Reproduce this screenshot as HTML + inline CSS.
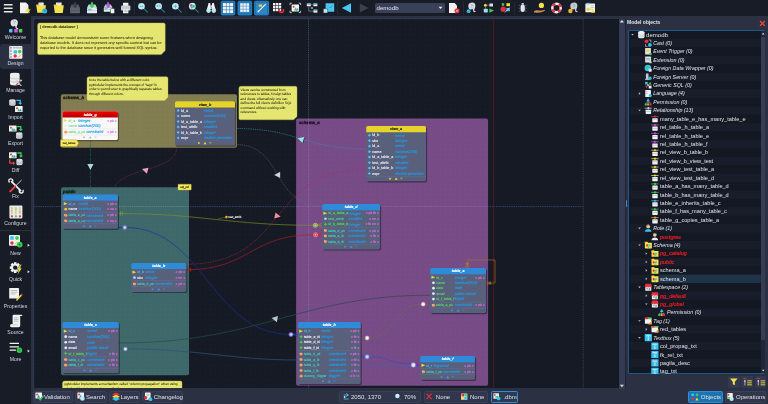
<!DOCTYPE html>
<html lang="en"><head><meta charset="utf-8"><title>pgModeler - demodb</title>
<style>
html,body{margin:0;padding:0;background:#171c26;overflow:hidden}
body{width:768px;height:404px;position:relative;will-change:transform;font-family:"Liberation Sans",sans-serif;color:#dfe2ea}
div,svg,span,i{position:absolute;box-sizing:border-box}
.ic{overflow:hidden;display:block}
.toolbar{left:0;top:0;width:768px;height:16px;background:#171c26}
.combo{left:374.5px;top:2.8px;width:70.5px;height:10.4px;background:#3a4058;border-radius:1.6px}
.combo span{left:2px;top:1.6px;font-size:6.1px;line-height:7px;color:#e4e6ee;white-space:nowrap}
.combo i{right:3px;top:4.2px;width:0;height:0;border-left:1.5px solid transparent;border-right:1.5px solid transparent;border-top:1.9px solid #f0f0f0}
.sidebar{left:0;top:0;width:31px;height:390px;background:#171c26}
.sel{left:0;top:43.8px;width:31px;height:25.6px;background:#2a2f42;border-radius:2.4px 0 0 2.4px}
.slabel{left:0;width:31px;text-align:center;font-size:5.15px;line-height:7px;color:#d4d7df;white-space:nowrap}
.sidesep{left:0;top:230.4px;width:31px;height:0.6px;background:#2a2f3e}
.center{left:31px;top:16px;width:737px;height:374px;background:#2b3042}
.vscroll{left:588.2px;top:2.6px;width:5.8px;height:370px;background:#353b52}
.vsep{left:594px;top:3px;width:1px;height:369.4px;background:#1f2433}
.split{left:594.6px;top:184px;width:1.6px;height:7px;background:#3a90dc;border-radius:0.6px}
.panel{left:596px;top:0;width:141px;height:374px}
.ptitle{left:0px;top:2.8px;font-size:5px;line-height:7px;font-weight:bold;color:#e2e4ec;white-space:nowrap}
.treebox{left:1.4px;top:13.6px;width:136.6px;height:344px;background:#141823;border:0.8px solid #1d5a8a;border-radius:1px}
.tscroll{left:131.2px;top:0.4px;width:4.2px;height:341.6px;background:#20253a}
.tthumb{left:0.2px;top:6px;width:4px;height:303px;background:#373d55;border-radius:0.6px}
.tree{left:0;top:0;width:768px;height:404px}
.tl{font-size:5.6px;line-height:8.4px;height:8.4px;color:#e2e4ec;white-space:nowrap}
.tl.big{font-size:6.1px}
.tl.it{font-style:italic;font-size:5.3px}
.tl.red{color:#f21c26;font-size:5.5px;-webkit-text-stroke:0.18px #f21c26}
.pbtn{top:359.6px;width:11.6px;height:12px;background:#333950;border-radius:1.4px}
.bottom{left:0;top:390px;width:768px;height:14px;background:linear-gradient(90deg,#171c26 31px,#2b3042 31px)}
.bbtn{top:1.4px;height:11.6px;background:#30364b;border:0.6px solid #3a4057;border-radius:1.4px;font-size:6px;line-height:10.4px;color:#dfe2ea;white-space:nowrap}
.bbtn span{top:0}
.bbtn.on{background:#1d72b0;border-color:#2a90da}
.bbtn.dbm{border-color:#2f8fd6;background:#2c3a52}
svg text{font-family:"Liberation Sans",sans-serif;text-rendering:geometricPrecision}
u{text-decoration-thickness:0.3px;text-underline-offset:0.8px;text-decoration-color:rgba(223,226,234,0.45)}
</style></head>
<body>
<div class="center">
<svg class="ic canvas" style="left:0;top:0" width="589" height="372.4" viewBox="31 16 589 372.4" font-family="Liberation Sans, sans-serif"><defs><pattern id="gd" x="34.6" y="19.4" width="5" height="5" patternUnits="userSpaceOnUse"><rect x="0" y="0" width="0.9" height="0.9" fill="#1e2331"/></pattern><pattern id="gd2" x="34.6" y="19.4" width="5" height="5" patternUnits="userSpaceOnUse"><rect x="0" y="0" width="0.9" height="0.9" fill="rgba(255,255,255,0.07)"/></pattern></defs><rect x="34" y="19" width="585" height="369.4" fill="#151a24"/><rect x="34" y="19" width="459.5" height="369.4" fill="url(#gd)"/><line x1="34" y1="18.7" x2="583.4" y2="18.7" stroke="#3c4468" stroke-width="0.8" stroke-dasharray="1.3 0.9"/><line x1="33.8" y1="19" x2="33.8" y2="388.4" stroke="#3c4468" stroke-width="0.8" stroke-dasharray="1.3 0.9"/><line x1="583.2" y1="19" x2="583.2" y2="388.4" stroke="#3a4262" stroke-width="0.9" stroke-dasharray="1.3 0.9"/><line x1="308.5" y1="19" x2="308.5" y2="388.4" stroke="#44507e" stroke-width="0.8" stroke-dasharray="1.3 0.9"/><line x1="34" y1="206.6" x2="583" y2="206.6" stroke="#44507e" stroke-width="0.8" stroke-dasharray="1.3 0.9"/><line x1="493.6" y1="19" x2="493.6" y2="388.4" stroke="#5c1820" stroke-width="0.9"/><rect x="60.8" y="94.2" width="176.2" height="53.6" fill="#827d51" rx="2"/><text x="63" y="99.4" font-size="4.3" fill="#15150c" stroke="#15150c" stroke-width="0.25" font-weight="bold" font-style="italic">schema_b</text><rect x="61" y="187.2" width="128" height="188" fill="#3e6869" rx="2"/><text x="63" y="192.7" font-size="4.3" fill="#0e1a1a" stroke="#0e1a1a" stroke-width="0.25" font-weight="bold" font-style="italic">public</text><rect x="296.1" y="118.5" width="192" height="267.2" fill="#764b86" rx="2"/><text x="298.9" y="124.2" font-size="4.3" fill="#1a0e20" stroke="#1a0e20" stroke-width="0.25" font-weight="bold" font-style="italic">schema_a</text><rect x="296.1" y="118.5" width="192" height="267.2" fill="url(#gd2)" rx="2"/><rect x="61" y="187.2" width="128" height="188" fill="url(#gd2)" rx="2"/><rect x="60.8" y="94.2" width="176.2" height="53.6" fill="url(#gd2)" rx="2"/><line x1="308.5" y1="119" x2="308.5" y2="385.5" stroke="#8a70b4" stroke-width="0.7" stroke-dasharray="1.3 0.9"/><line x1="296.5" y1="206.6" x2="488" y2="206.6" stroke="#8a70b4" stroke-width="0.7" stroke-dasharray="1.3 0.9"/><line x1="61.5" y1="206.6" x2="188.5" y2="206.6" stroke="#6a9a9a" stroke-width="0.7" stroke-dasharray="1.3 0.9"/><rect x="178" y="184.2" width="13.2" height="5.8" fill="#f6ea62" rx="0.4" stroke="#b8ac30" stroke-width="0.4"/><text x="184.6" y="188.2" font-size="2.9" fill="#2a2a10" stroke="#2a2a10" stroke-width="0.14" text-anchor="middle">sql_ref</text><line x1="90.5" y1="140" x2="90.5" y2="194.5" stroke="#22685c" stroke-width="0.6" stroke-dasharray="2.4 0.7 0.7 0.7"/><polygon points="91,170.6 87.89,164.62 94.11,164.62" fill="rgba(5,8,14,0.55)"/><polygon points="90.4,169.9 87.29,163.92 93.51,163.92" fill="#a8dccc"/><path d="M177,146 C177,175 113,165 113,194.5" fill="none" stroke="#a82860" stroke-width="0.6" stroke-dasharray="0.9 0.8"/><polygon points="142.53,169.82 149.11,168.36 147.5,174.37" fill="rgba(5,8,14,0.55)"/><polygon points="141.93,169.12 148.51,167.66 146.9,173.67" fill="#e8a0c4"/><path d="M235,128.5 C300,128.5 300,148.8 366.3,148.8" fill="none" stroke="#2a9cac" stroke-width="0.6" stroke-dasharray="1.3 0.9"/><polygon points="298.27,138.89 304.89,137.66 303.07,143.61" fill="rgba(5,8,14,0.55)"/><polygon points="297.67,138.19 304.29,136.96 302.47,142.91" fill="#98e8e8"/><path d="M235,144.5 C285,144.5 270,205.4 322.3,205.4" fill="none" stroke="#666c84" stroke-width="0.55" stroke-dasharray="1.3 0.9"/><polygon points="274.8,175.6 280.78,172.49 280.78,178.71" fill="rgba(5,8,14,0.55)"/><polygon points="274.2,174.9 280.18,171.79 280.18,178.01" fill="#cfd4e0"/><path d="M186,264.2 C290,264 265,169.4 366.3,169.4" fill="none" stroke="#c42844" stroke-width="0.6" stroke-dasharray="0.9 0.8"/><polygon points="281.32,217.49 274.82,219.29 276.12,213.2" fill="rgba(5,8,14,0.55)"/><polygon points="280.72,216.79 274.22,218.59 275.52,212.5" fill="#f08c9c"/><path d="M186,269.8 C250,269.8 250,234.8 313.6,234.8" fill="none" stroke="#b81c24" stroke-width="0.65"/><path d="M188.7,267.6 v4.4 M190.5,267.6 v4.4" fill="none" stroke="#d01c24" stroke-width="0.6"/><path d="M317.6,234.8 L322.2,232.6 M317.6,234.8 L322.2,237 M317.6,234.8 H322.2" fill="none" stroke="#d82434" stroke-width="0.6"/><circle cx="315.6" cy="234.8" r="2.1" fill="#e8404c" stroke="#f4a0a8" stroke-width="0.6"/><rect x="314.8" y="234" width="1.6" height="1.6" fill="rgba(255,255,255,0.55)" rx="0.3"/><path d="M118,213.5 C200,213.5 230,225.3 313.4,225.3" fill="none" stroke="#7e9020" stroke-width="0.65"/><path d="M120.4,211.4 v4.2 M122.2,211.4 v4.2" fill="none" stroke="#96a828" stroke-width="0.6"/><path d="M317.4,225.3 L322.2,223.1 M317.4,225.3 L322.2,227.5 M317.4,225.3 H322.2" fill="none" stroke="#869820" stroke-width="0.6"/><circle cx="315.4" cy="225.3" r="2.1" fill="#8aa040" stroke="#c4d48c" stroke-width="0.6"/><rect x="314.6" y="224.5" width="1.6" height="1.6" fill="rgba(255,255,255,0.55)" rx="0.3"/><path d="M218,218.6 L226.4,217.2" fill="none" stroke="#869820" stroke-width="0.4"/><circle cx="226.4" cy="217.1" r="1.3" fill="#f2b414"/><text x="228.6" y="218.2" font-size="2.9" fill="#e8e8ee" stroke="#e8e8ee" stroke-width="0.14">test_attrib</text><path d="M118,227.5 H125 C205,227.5 210,334 291,334.5" fill="none" stroke="#1c2fa0" stroke-width="0.65"/><path d="M120.2,225.6 v3.8" fill="none" stroke="#2a44c8" stroke-width="0.6"/><circle cx="124.8" cy="227.5" r="1.9" fill="#b4b0ee" stroke="#7a78d8" stroke-width="0.6"/><rect x="124" y="226.7" width="1.6" height="1.6" fill="rgba(255,255,255,0.55)" rx="0.3"/><path d="M293,334.5 L297.8,332.3 M293,334.5 L297.8,336.7 M293,334.5 H297.8" fill="none" stroke="#2438b8" stroke-width="0.6"/><circle cx="291" cy="334.5" r="2.1" fill="#a6a4ec" stroke="#6c6ad4" stroke-width="0.6"/><rect x="290.2" y="333.7" width="1.6" height="1.6" fill="rgba(255,255,255,0.55)" rx="0.3"/><path d="M118.8,343 C260,343 300,295.2 430.3,295.2" fill="none" stroke="#2a4a4e" stroke-width="0.7"/><polygon points="272.16,318.74 278.59,316.71 277.51,322.84" fill="rgba(5,8,14,0.55)"/><polygon points="271.56,318.04 277.99,316.01 276.91,322.14" fill="#b0ccc4"/><path d="M127,349 C200,349 230,360 297.9,360" fill="none" stroke="#32507c" stroke-width="0.7"/><circle cx="125.4" cy="349" r="1.8" fill="#d4d6ee" stroke="#9a9cc8" stroke-width="0.6"/><rect x="124.6" y="348.2" width="1.6" height="1.6" fill="rgba(255,255,255,0.55)" rx="0.3"/><line x1="119" y1="349" x2="123.6" y2="349" stroke="#32507c" stroke-width="0.6"/><path d="M369,338 C395,338 395,304.2 421.2,304.2" fill="none" stroke="#6c6a5c" stroke-width="0.6"/><circle cx="367.1" cy="338" r="1.9" fill="#f2eedc" stroke="#c8c4a8" stroke-width="0.6"/><rect x="366.3" y="337.2" width="1.6" height="1.6" fill="rgba(255,255,255,0.55)" rx="0.3"/><circle cx="423.2" cy="304.2" r="1.9" fill="#f2eedc" stroke="#c8c4a8" stroke-width="0.6"/><rect x="422.4" y="303.4" width="1.6" height="1.6" fill="rgba(255,255,255,0.55)" rx="0.3"/><line x1="360.6" y1="338" x2="365.2" y2="338" stroke="#6c6a5c" stroke-width="0.5"/><line x1="425.2" y1="304.2" x2="430.2" y2="304.2" stroke="#6c6a5c" stroke-width="0.5"/><path d="M369,356.8 C390,356.8 390,364 411.4,364" fill="none" stroke="#3448c8" stroke-width="0.65"/><path d="M360.6,354.6 L365.2,356.8 L360.6,359 M360.6,356.8 H365.2" fill="none" stroke="#3448c8" stroke-width="0.6"/><circle cx="367.1" cy="356.8" r="2.1" fill="#a8c4f4" stroke="#6c8cdc" stroke-width="0.6"/><rect x="366.3" y="356" width="1.6" height="1.6" fill="rgba(255,255,255,0.55)" rx="0.3"/><path d="M360.6,365.3 C380,365.3 395,366.4 411.4,366.4" fill="none" stroke="#4a5ea8" stroke-width="0.7"/><circle cx="413.4" cy="365" r="2.2" fill="#dcdcf4" stroke="#9c9cdc" stroke-width="0.6"/><rect x="412.6" y="364.2" width="1.6" height="1.6" fill="rgba(255,255,255,0.55)" rx="0.3"/><path d="M415.6,365 H420.2 M417.6,363.2 v3.6" fill="none" stroke="#3448c8" stroke-width="0.6"/><path d="M467.3,268 V260 H495 V283.1 H486" fill="none" stroke="#a8741c" stroke-width="0.65"/><path d="M465.3,263.8 H469.3 M465.9,262.4 L468.7,265.2 M468.7,262.4 L465.9,265.2 M467.3,265.2 L465.2,268 M467.3,265.2 L469.4,268" fill="none" stroke="#c8861e" stroke-width="0.5"/><path d="M490,281.1 V285.1 M488.6,281.7 L491.4,284.5 M491.4,281.7 L488.6,284.5 M488.8,283.1 L486.2,280.9 M488.8,283.1 L486.2,285.3" fill="none" stroke="#c8861e" stroke-width="0.5"/><path d="M39.6,23 h124.1 a1.5,1.5 0 0 1 1.5,1.5 v26.1 l-4,4 h-122.1 a1.5,1.5 0 0 1 -1.5,-1.5 v-28.1 a2,2 0 0 1 2,-2 z" fill="#e5e672" stroke="#b9b84e" stroke-width="0.4"/><text x="39.9" y="28.1" font-size="3.9" fill="#33330f" stroke="#33330f" stroke-width="0.05" font-weight="bold">[ demodb database ]</text><text x="39.9" y="38.6" font-size="3.9" fill="#33330f" stroke="#33330f" stroke-width="0.05">This database model demonstrate some features when designing</text><text x="39.9" y="43.85" font-size="3.9" fill="#33330f" stroke="#33330f" stroke-width="0.05">database models. It does not represent any specific context but can be</text><text x="39.9" y="49.1" font-size="3.9" fill="#33330f" stroke="#33330f" stroke-width="0.05">exported to the database since it generates well formed SQL syntax.</text><path d="M89,76.7 h77.5 a1.5,1.5 0 0 1 1.5,1.5 v19.1 l-3.2,3.2 h-76.3 a1.5,1.5 0 0 1 -1.5,-1.5 v-20.3 a2,2 0 0 1 2,-2 z" fill="#e5e672" stroke="#b9b84e" stroke-width="0.4"/><text x="89" y="81.5" font-size="3.3" fill="#33330f" stroke="#33330f" stroke-width="0.05">Note the table below with a different color.</text><text x="89" y="85.85" font-size="3.3" fill="#33330f" stroke="#33330f" stroke-width="0.05">pgModeler implements the concept of "tags" in</text><text x="89" y="90.2" font-size="3.3" fill="#33330f" stroke="#33330f" stroke-width="0.05">order to permit user to graphically separate tables</text><text x="89" y="94.55" font-size="3.3" fill="#33330f" stroke="#33330f" stroke-width="0.05">through different colors.</text><path d="M240.9,86.3 h54.6 a1.5,1.5 0 0 1 1.5,1.5 v28.6 l-3.4,3.4 h-53.2 a1.5,1.5 0 0 1 -1.5,-1.5 v-30 a2,2 0 0 1 2,-2 z" fill="#e5e672" stroke="#b9b84e" stroke-width="0.4"/><text x="240.5" y="91.1" font-size="3.3" fill="#33330f" stroke="#33330f" stroke-width="0.05">Views can be constructed from</text><text x="240.5" y="95.5" font-size="3.3" fill="#33330f" stroke="#33330f" stroke-width="0.05">references to tables, foreign tables</text><text x="240.5" y="99.9" font-size="3.3" fill="#33330f" stroke="#33330f" stroke-width="0.05">and views. Alternatively one can</text><text x="240.5" y="104.3" font-size="3.3" fill="#33330f" stroke="#33330f" stroke-width="0.05">define the full view's definition SQL</text><text x="240.5" y="108.7" font-size="3.3" fill="#33330f" stroke="#33330f" stroke-width="0.05">command without working with</text><text x="240.5" y="113.1" font-size="3.3" fill="#33330f" stroke="#33330f" stroke-width="0.05">references.</text><path d="M64.5,381 h116 a1.5,1.5 0 0 1 1.5,1.5 v14.5 l-3,3 h-115 a1.5,1.5 0 0 1 -1.5,-1.5 v-15.5 a2,2 0 0 1 2,-2 z" fill="#e5e672" stroke="#b9b84e" stroke-width="0.4"/><text x="64.4" y="385.5" font-size="3.3" fill="#33330f" stroke="#33330f" stroke-width="0.05">pgModeler implements a mechanism called "column propagation" when using</text><text x="64.4" y="389.9" font-size="3.3" fill="#33330f" stroke="#33330f" stroke-width="0.05">relationships 1:1, 1:n and generalization.</text><defs><linearGradient id="redh" x1="0" y1="0" x2="0" y2="1"><stop offset="0" stop-color="#f20000"/><stop offset="1" stop-color="#b80000"/></linearGradient></defs><rect x="63.6" y="112.45" width="55.4" height="28.75" fill="rgba(40,38,10,0.5)" rx="1.6"/><rect x="62.5" y="111.25" width="55.4" height="28.75" fill="#f8f8f8" rx="1.6"/><path d="M62.5,117.45 v-4.6 a1.6,1.6 0 0 1 1.6,-1.6 h52.2 a1.6,1.6 0 0 1 1.6,1.6 v4.6 z" fill="url(#redh)"/><text x="90.2" y="115.65" font-size="3.7" fill="#ffffff" stroke="#ffffff" stroke-width="0.14" font-weight="bold" font-style="italic" text-anchor="middle">table_g</text><polygon points="64.1,119.17 67.5,120.47 64.1,121.77" fill="#f2de3c"/><rect x="63.8" y="118.97" width="0.6" height="3" fill="#f2de3c"/><text x="68.5" y="121.72" font-size="3.5" fill="#7cdc84" stroke="#7cdc84" stroke-width="0.14" font-style="italic">id_a</text><text x="78.3" y="121.77" font-size="3.95" fill="#1f9cec" stroke="#1f9cec" stroke-width="0.14" font-style="italic">integer</text><text x="116.8" y="121.67" font-size="3.5" fill="#e468e4" stroke="#e468e4" stroke-width="0.14" text-anchor="end">« pk »</text><circle cx="65.7" cy="125.92" r="1.35" fill="#eceef4"/><text x="68.5" y="127.17" font-size="3.5" fill="#9ad8a0" stroke="#9ad8a0" stroke-width="0.14">name</text><text x="78.3" y="127.22" font-size="3.95" fill="#1f9cec" stroke="#1f9cec" stroke-width="0.14" font-style="italic">varchar(200)</text><rect x="62.5" y="128.8" width="55.4" height="0.35" fill="#d4d6da"/><path d="M64.2,132.38 q0,-1.8 1.6,-1.8 q1.6,0 1.6,1.6 q0,1.4 -1.6,1.4 q-1.6,0 -1.6,-1.2 z" fill="#f29a62"/><circle cx="64.8" cy="131.68" r="0.7" fill="#f6b488"/><text x="68.5" y="133.23" font-size="3.4" fill="#7cdc84" stroke="#7cdc84" stroke-width="0.14" font-style="italic">table_g_pk</text><text x="86.4" y="133.28" font-size="3.95" fill="#1f9cec" stroke="#1f9cec" stroke-width="0.14" font-style="italic">constraint</text><text x="116.8" y="133.18" font-size="3.5" fill="#e468e4" stroke="#e468e4" stroke-width="0.14" text-anchor="end">« pk »</text><rect x="62.5" y="134.85" width="55.4" height="0.35" fill="#d4d6da"/><polygon points="83.8,136.3 85.6,137.3 83.8,138.3" fill="#b8bcc4"/><rect x="83.2" y="136.4" width="0.7" height="1.8" fill="#b8bcc4"/><polygon points="88.7,138.4 90.2,136.1 91.7,138.4" fill="#b8bcc4"/><polygon points="94.1,136.3 96.9,136.3 95.5,138.4" fill="#b8bcc4" opacity="0.45"/><path d="M61.2,139.8 h15.4 l2,3.4 l-2,3.4 h-15.4 a0.6,0.6 0 0 1 -0.6,-0.6 v-5.6 a0.6,0.6 0 0 1 0.6,-0.6 z" fill="#f6ea62" stroke="#b8a830" stroke-width="0.5"/><text x="69" y="144.2" font-size="2.7" fill="#2a2a10" stroke="#2a2a10" stroke-width="0.14" text-anchor="middle">red_tables</text><rect x="176.1" y="102.45" width="60" height="44.35" fill="rgba(10,12,20,0.45)" rx="1.6"/><rect x="175" y="101.25" width="60" height="44.35" fill="#59607b" rx="1.6"/><path d="M175,107.45 v-4.6 a1.6,1.6 0 0 1 1.6,-1.6 h56.8 a1.6,1.6 0 0 1 1.6,1.6 v4.6 z" fill="#e6d42a"/><text x="205" y="105.65" font-size="3.7" fill="#1c1c10" stroke="#1c1c10" stroke-width="0.14" font-weight="bold" font-style="italic" text-anchor="middle">view_b</text><polygon points="178.2,108.9 179.7,110.5 178.2,112.1 176.7,110.5" fill="#4aa8f2"/><circle cx="178.2" cy="110.5" r="0.9" fill="#6cbcf8"/><text x="181" y="111.75" font-size="3.7" fill="#e6e8f0" stroke="#e6e8f0" stroke-width="0.14">id_a</text><text x="203.8" y="111.8" font-size="3.95" fill="#1f9cec" stroke="#1f9cec" stroke-width="0.14" font-style="italic">serial</text><polygon points="178.2,114.39 179.7,115.99 178.2,117.59 176.7,115.99" fill="#4aa8f2"/><circle cx="178.2" cy="115.99" r="0.9" fill="#6cbcf8"/><text x="181" y="117.24" font-size="3.7" fill="#e6e8f0" stroke="#e6e8f0" stroke-width="0.14">name</text><text x="203.8" y="117.29" font-size="3.95" fill="#1f9cec" stroke="#1f9cec" stroke-width="0.14" font-style="italic">varchar(200)</text><polygon points="178.2,119.88 179.7,121.48 178.2,123.08 176.7,121.48" fill="#4aa8f2"/><circle cx="178.2" cy="121.48" r="0.9" fill="#6cbcf8"/><text x="181" y="122.73" font-size="3.7" fill="#e6e8f0" stroke="#e6e8f0" stroke-width="0.14">id_a_table_a</text><text x="203.8" y="122.78" font-size="3.95" fill="#1f9cec" stroke="#1f9cec" stroke-width="0.14" font-style="italic">integer</text><polygon points="178.2,125.37 179.7,126.97 178.2,128.57 176.7,126.97" fill="#4aa8f2"/><circle cx="178.2" cy="126.97" r="0.9" fill="#6cbcf8"/><text x="181" y="128.22" font-size="3.7" fill="#e6e8f0" stroke="#e6e8f0" stroke-width="0.14">test_attrib</text><text x="203.8" y="128.27" font-size="3.95" fill="#1f9cec" stroke="#1f9cec" stroke-width="0.14" font-style="italic">smallint</text><polygon points="178.2,130.86 179.7,132.46 178.2,134.06 176.7,132.46" fill="#4aa8f2"/><circle cx="178.2" cy="132.46" r="0.9" fill="#6cbcf8"/><text x="181" y="133.71" font-size="3.7" fill="#e6e8f0" stroke="#e6e8f0" stroke-width="0.14">id_b_table_b</text><text x="203.8" y="133.76" font-size="3.95" fill="#1f9cec" stroke="#1f9cec" stroke-width="0.14" font-style="italic">integer</text><polygon points="178.2,136.35 179.7,137.95 178.2,139.55 176.7,137.95" fill="#4aa8f2"/><circle cx="178.2" cy="137.95" r="0.9" fill="#6cbcf8"/><text x="181" y="139.2" font-size="3.7" fill="#e6e8f0" stroke="#e6e8f0" stroke-width="0.14">expr</text><text x="203.8" y="139.25" font-size="3.95" fill="#1f9cec" stroke="#1f9cec" stroke-width="0.14" font-style="italic">double precision</text><rect x="175" y="140.85" width="60" height="0.35" fill="#6c7392"/><polygon points="198.6,142.1 200.4,143.1 198.6,144.1" fill="#f2de3c"/><rect x="198" y="142.2" width="0.7" height="1.8" fill="#f2de3c"/><polygon points="203.5,144.2 205,141.9 206.5,144.2" fill="#f2de3c"/><polygon points="208.9,142.1 211.7,142.1 210.3,144.2" fill="#f2de3c" opacity="0.45"/><rect x="367.35" y="127.2" width="59.75" height="55.25" fill="rgba(10,12,20,0.45)" rx="1.6"/><rect x="366.25" y="126" width="59.75" height="55.25" fill="#59607b" rx="1.6"/><path d="M366.25,132.2 v-4.6 a1.6,1.6 0 0 1 1.6,-1.6 h56.55 a1.6,1.6 0 0 1 1.6,1.6 v4.6 z" fill="#e6d42a"/><text x="396.12" y="130.4" font-size="3.7" fill="#1c1c10" stroke="#1c1c10" stroke-width="0.14" font-weight="bold" font-style="italic" text-anchor="middle">view_a</text><polygon points="369.45,133.63 370.95,135.23 369.45,136.83 367.95,135.23" fill="#4aa8f2"/><circle cx="369.45" cy="135.23" r="0.9" fill="#6cbcf8"/><text x="372.25" y="136.48" font-size="3.7" fill="#e6e8f0" stroke="#e6e8f0" stroke-width="0.14">id_b</text><text x="395.05" y="136.53" font-size="3.95" fill="#1f9cec" stroke="#1f9cec" stroke-width="0.14" font-style="italic">serial</text><polygon points="369.45,139.1 370.95,140.7 369.45,142.3 367.95,140.7" fill="#4aa8f2"/><circle cx="369.45" cy="140.7" r="0.9" fill="#6cbcf8"/><text x="372.25" y="141.95" font-size="3.7" fill="#e6e8f0" stroke="#e6e8f0" stroke-width="0.14">sku</text><text x="395.05" y="142" font-size="3.95" fill="#1f9cec" stroke="#1f9cec" stroke-width="0.14" font-style="italic">integer</text><polygon points="369.45,144.57 370.95,146.17 369.45,147.77 367.95,146.17" fill="#4aa8f2"/><circle cx="369.45" cy="146.17" r="0.9" fill="#6cbcf8"/><text x="372.25" y="147.42" font-size="3.7" fill="#e6e8f0" stroke="#e6e8f0" stroke-width="0.14">id_a</text><text x="395.05" y="147.47" font-size="3.95" fill="#1f9cec" stroke="#1f9cec" stroke-width="0.14" font-style="italic">serial</text><polygon points="369.45,150.04 370.95,151.64 369.45,153.24 367.95,151.64" fill="#4aa8f2"/><circle cx="369.45" cy="151.64" r="0.9" fill="#6cbcf8"/><text x="372.25" y="152.89" font-size="3.7" fill="#e6e8f0" stroke="#e6e8f0" stroke-width="0.14">name</text><text x="395.05" y="152.94" font-size="3.95" fill="#1f9cec" stroke="#1f9cec" stroke-width="0.14" font-style="italic">varchar(200)</text><polygon points="369.45,155.51 370.95,157.11 369.45,158.71 367.95,157.11" fill="#4aa8f2"/><circle cx="369.45" cy="157.11" r="0.9" fill="#6cbcf8"/><text x="372.25" y="158.36" font-size="3.7" fill="#e6e8f0" stroke="#e6e8f0" stroke-width="0.14">id_a_table_a</text><text x="395.05" y="158.41" font-size="3.95" fill="#1f9cec" stroke="#1f9cec" stroke-width="0.14" font-style="italic">integer</text><polygon points="369.45,160.98 370.95,162.58 369.45,164.18 367.95,162.58" fill="#4aa8f2"/><circle cx="369.45" cy="162.58" r="0.9" fill="#6cbcf8"/><text x="372.25" y="163.83" font-size="3.7" fill="#e6e8f0" stroke="#e6e8f0" stroke-width="0.14">test_attrib</text><text x="395.05" y="163.88" font-size="3.95" fill="#1f9cec" stroke="#1f9cec" stroke-width="0.14" font-style="italic">smallint</text><polygon points="369.45,166.45 370.95,168.05 369.45,169.65 367.95,168.05" fill="#4aa8f2"/><circle cx="369.45" cy="168.05" r="0.9" fill="#6cbcf8"/><text x="372.25" y="169.3" font-size="3.7" fill="#e6e8f0" stroke="#e6e8f0" stroke-width="0.14">id_b_table_b</text><text x="395.05" y="169.35" font-size="3.95" fill="#1f9cec" stroke="#1f9cec" stroke-width="0.14" font-style="italic">integer</text><polygon points="369.45,171.92 370.95,173.52 369.45,175.12 367.95,173.52" fill="#4aa8f2"/><circle cx="369.45" cy="173.52" r="0.9" fill="#6cbcf8"/><text x="372.25" y="174.77" font-size="3.7" fill="#e6e8f0" stroke="#e6e8f0" stroke-width="0.14">expr</text><text x="395.05" y="174.82" font-size="3.95" fill="#1f9cec" stroke="#1f9cec" stroke-width="0.14" font-style="italic">double precision</text><rect x="366.25" y="176.4" width="59.75" height="0.35" fill="#6c7392"/><polygon points="389.73,177.7 391.52,178.7 389.73,179.7" fill="#f2de3c"/><rect x="389.12" y="177.8" width="0.7" height="1.8" fill="#f2de3c"/><polygon points="394.62,179.8 396.12,177.5 397.62,179.8" fill="#f2de3c"/><polygon points="400.02,177.7 402.82,177.7 401.43,179.8" fill="#f2de3c" opacity="0.45"/><rect x="63.6" y="195.6" width="55.4" height="34.35" fill="rgba(10,12,20,0.45)" rx="1.6"/><rect x="62.5" y="194.4" width="55.4" height="34.35" fill="#59607b" rx="1.6"/><path d="M62.5,200.6 v-4.6 a1.6,1.6 0 0 1 1.6,-1.6 h52.2 a1.6,1.6 0 0 1 1.6,1.6 v4.6 z" fill="#2e8bd9"/><text x="90.2" y="198.8" font-size="3.7" fill="#ffffff" stroke="#ffffff" stroke-width="0.14" font-weight="bold" font-style="italic" text-anchor="middle">table_a</text><polygon points="64.1,202.34 67.5,203.64 64.1,204.94" fill="#f2de3c"/><rect x="63.8" y="202.14" width="0.6" height="3" fill="#f2de3c"/><text x="68.5" y="204.89" font-size="3.5" fill="#42b4f0" stroke="#42b4f0" stroke-width="0.14" font-style="italic">id_a</text><text x="78.5" y="204.94" font-size="3.95" fill="#1f9cec" stroke="#1f9cec" stroke-width="0.14" font-style="italic">serial</text><text x="116.8" y="204.84" font-size="3.5" fill="#e468e4" stroke="#e468e4" stroke-width="0.14" text-anchor="end">« pk »</text><circle cx="65.7" cy="209.13" r="1.4" fill="#f2c22c"/><circle cx="65.7" cy="209.13" r="0.5" fill="#f8e070"/><text x="68.5" y="210.38" font-size="3.5" fill="#e6e8f0" stroke="#e6e8f0" stroke-width="0.14">name</text><text x="78.5" y="210.43" font-size="3.95" fill="#1f9cec" stroke="#1f9cec" stroke-width="0.14" font-style="italic">varchar(200)</text><text x="116.8" y="210.33" font-size="3.5" fill="#e468e4" stroke="#e468e4" stroke-width="0.14" text-anchor="end">« uq »</text><rect x="62.5" y="212.03" width="55.4" height="0.35" fill="#6c7392"/><path d="M64.2,215.62 q0,-1.8 1.6,-1.8 q1.6,0 1.6,1.6 q0,1.4 -1.6,1.4 q-1.6,0 -1.6,-1.2 z" fill="#f29a62"/><circle cx="64.8" cy="214.92" r="0.7" fill="#f6b488"/><text x="68.5" y="216.47" font-size="3.4" fill="#3ccab6" stroke="#3ccab6" stroke-width="0.14" font-style="italic">table_a_pk</text><text x="86.1" y="216.52" font-size="3.95" fill="#1f9cec" stroke="#1f9cec" stroke-width="0.14" font-style="italic">constraint</text><text x="116.8" y="216.42" font-size="3.5" fill="#e468e4" stroke="#e468e4" stroke-width="0.14" text-anchor="end">« pk »</text><path d="M64.2,221.11 q0,-1.8 1.6,-1.8 q1.6,0 1.6,1.6 q0,1.4 -1.6,1.4 q-1.6,0 -1.6,-1.2 z" fill="#f29a62"/><circle cx="64.8" cy="220.41" r="0.7" fill="#f6b488"/><text x="68.5" y="221.96" font-size="3.4" fill="#3ccab6" stroke="#3ccab6" stroke-width="0.14" font-style="italic">table_a_uq</text><text x="86.1" y="222.01" font-size="3.95" fill="#1f9cec" stroke="#1f9cec" stroke-width="0.14" font-style="italic">constraint</text><text x="116.8" y="221.91" font-size="3.5" fill="#e468e4" stroke="#e468e4" stroke-width="0.14" text-anchor="end">« uq »</text><rect x="62.5" y="223.6" width="55.4" height="0.35" fill="#6c7392"/><polygon points="83.8,225.05 85.6,226.05 83.8,227.05" fill="#3f96ea"/><rect x="83.2" y="225.15" width="0.7" height="1.8" fill="#3f96ea"/><polygon points="88.7,227.15 90.2,224.85 91.7,227.15" fill="#3f96ea"/><polygon points="94.1,225.05 96.9,225.05 95.5,227.15" fill="#3f96ea" opacity="0.45"/><rect x="132.35" y="264.1" width="55" height="29" fill="rgba(10,12,20,0.45)" rx="1.6"/><rect x="131.25" y="262.9" width="55" height="29" fill="#59607b" rx="1.6"/><path d="M131.25,269.1 v-4.6 a1.6,1.6 0 0 1 1.6,-1.6 h51.8 a1.6,1.6 0 0 1 1.6,1.6 v4.6 z" fill="#2e8bd9"/><text x="158.75" y="267.3" font-size="3.7" fill="#ffffff" stroke="#ffffff" stroke-width="0.14" font-weight="bold" font-style="italic" text-anchor="middle">table_b</text><polygon points="132.85,270.87 136.25,272.17 132.85,273.47" fill="#f2de3c"/><rect x="132.55" y="270.67" width="0.6" height="3" fill="#f2de3c"/><text x="137.25" y="273.42" font-size="3.5" fill="#42b4f0" stroke="#42b4f0" stroke-width="0.14" font-style="italic">id_b</text><text x="145.05" y="273.47" font-size="3.95" fill="#1f9cec" stroke="#1f9cec" stroke-width="0.14" font-style="italic">serial</text><text x="185.15" y="273.37" font-size="3.5" fill="#e468e4" stroke="#e468e4" stroke-width="0.14" text-anchor="end">« pk »</text><circle cx="134.45" cy="277.7" r="1.35" fill="#a4d4fa"/><text x="137.25" y="278.95" font-size="3.5" fill="#e6e8f0" stroke="#e6e8f0" stroke-width="0.14">sku</text><text x="145.05" y="279" font-size="3.95" fill="#1f9cec" stroke="#1f9cec" stroke-width="0.14" font-style="italic">integer</text><text x="185.15" y="278.9" font-size="3.5" fill="#e468e4" stroke="#e468e4" stroke-width="0.14" text-anchor="end">« nn »</text><rect x="131.25" y="280.62" width="55" height="0.35" fill="#6c7392"/><path d="M132.95,284.23 q0,-1.8 1.6,-1.8 q1.6,0 1.6,1.6 q0,1.4 -1.6,1.4 q-1.6,0 -1.6,-1.2 z" fill="#f29a62"/><circle cx="133.55" cy="283.53" r="0.7" fill="#f6b488"/><text x="137.25" y="285.08" font-size="3.4" fill="#3ccab6" stroke="#3ccab6" stroke-width="0.14" font-style="italic">table_b_pk</text><text x="155.05" y="285.13" font-size="3.95" fill="#1f9cec" stroke="#1f9cec" stroke-width="0.14" font-style="italic">constraint</text><text x="185.15" y="285.03" font-size="3.5" fill="#e468e4" stroke="#e468e4" stroke-width="0.14" text-anchor="end">« pk »</text><rect x="131.25" y="286.75" width="55" height="0.35" fill="#6c7392"/><polygon points="152.35,288.2 154.15,289.2 152.35,290.2" fill="#3f96ea"/><rect x="151.75" y="288.3" width="0.7" height="1.8" fill="#3f96ea"/><polygon points="157.25,290.3 158.75,288 160.25,290.3" fill="#3f96ea"/><polygon points="162.65,288.2 165.45,288.2 164.05,290.3" fill="#3f96ea" opacity="0.45"/><rect x="63.6" y="323.1" width="56.25" height="51.2" fill="rgba(10,12,20,0.45)" rx="1.6"/><rect x="62.5" y="321.9" width="56.25" height="51.2" fill="#59607b" rx="1.6"/><path d="M62.5,328.1 v-4.6 a1.6,1.6 0 0 1 1.6,-1.6 h53.05 a1.6,1.6 0 0 1 1.6,1.6 v4.6 z" fill="#2e8bd9"/><text x="90.62" y="326.3" font-size="3.7" fill="#ffffff" stroke="#ffffff" stroke-width="0.14" font-weight="bold" font-style="italic" text-anchor="middle">table_c</text><polygon points="64.1,329.87 67.5,331.17 64.1,332.47" fill="#f2de3c"/><rect x="63.8" y="329.67" width="0.6" height="3" fill="#f2de3c"/><text x="68.5" y="332.42" font-size="3.5" fill="#42b4f0" stroke="#42b4f0" stroke-width="0.14" font-style="italic">id_c</text><text x="87.3" y="332.47" font-size="3.95" fill="#1f9cec" stroke="#1f9cec" stroke-width="0.14" font-style="italic">serial</text><text x="117.65" y="332.37" font-size="3.5" fill="#e468e4" stroke="#e468e4" stroke-width="0.14" text-anchor="end">« pk »</text><circle cx="65.7" cy="336.71" r="1.35" fill="#eceef4"/><text x="68.5" y="337.96" font-size="3.5" fill="#e6e8f0" stroke="#e6e8f0" stroke-width="0.14">name</text><text x="87.3" y="338.01" font-size="3.95" fill="#1f9cec" stroke="#1f9cec" stroke-width="0.14" font-style="italic">varchar(200)</text><circle cx="65.7" cy="342.26" r="1.35" fill="#eceef4"/><text x="68.5" y="343.51" font-size="3.5" fill="#e6e8f0" stroke="#e6e8f0" stroke-width="0.14">date</text><text x="87.3" y="343.56" font-size="3.95" fill="#1f9cec" stroke="#1f9cec" stroke-width="0.14" font-style="italic">date</text><circle cx="65.7" cy="347.8" r="1.35" fill="#eceef4"/><text x="68.5" y="349.05" font-size="3.5" fill="#e6e8f0" stroke="#e6e8f0" stroke-width="0.14">email</text><text x="87.3" y="349.1" font-size="3.95" fill="#1f9cec" stroke="#1f9cec" stroke-width="0.14" font-style="italic">public.email</text><polygon points="63.8,353.34 65.2,352.74 65.7,351.54 66.2,352.74 67.6,353.34 66.2,353.94 65.7,355.14 65.2,353.94" fill="#4ad24a"/><circle cx="65.7" cy="353.34" r="0.9" fill="#4ad24a"/><text x="68.5" y="354.59" font-size="3.5" fill="#52d652" stroke="#52d652" stroke-width="0.14" font-style="italic">id_f_table_f</text><text x="87.3" y="354.64" font-size="3.95" fill="#1f9cec" stroke="#1f9cec" stroke-width="0.14" font-style="italic">bigint</text><text x="117.65" y="354.54" font-size="3.5" fill="#e468e4" stroke="#e468e4" stroke-width="0.14" text-anchor="end">« fk »</text><rect x="62.5" y="356.26" width="56.25" height="0.35" fill="#6c7392"/><path d="M64.2,359.89 q0,-1.8 1.6,-1.8 q1.6,0 1.6,1.6 q0,1.4 -1.6,1.4 q-1.6,0 -1.6,-1.2 z" fill="#f29a62"/><circle cx="64.8" cy="359.19" r="0.7" fill="#f6b488"/><text x="68.5" y="360.74" font-size="3.4" fill="#3ccab6" stroke="#3ccab6" stroke-width="0.14" font-style="italic">table_c_pk</text><text x="87.3" y="360.79" font-size="3.95" fill="#1f9cec" stroke="#1f9cec" stroke-width="0.14" font-style="italic">constraint</text><text x="117.65" y="360.69" font-size="3.5" fill="#e468e4" stroke="#e468e4" stroke-width="0.14" text-anchor="end">« pk »</text><path d="M64.2,365.43 q0,-1.8 1.6,-1.8 q1.6,0 1.6,1.6 q0,1.4 -1.6,1.4 q-1.6,0 -1.6,-1.2 z" fill="#f29a62"/><circle cx="64.8" cy="364.73" r="0.7" fill="#f6b488"/><text x="68.5" y="366.28" font-size="3.4" fill="#3ccab6" stroke="#3ccab6" stroke-width="0.14" font-style="italic">table_f_fk</text><text x="87.3" y="366.33" font-size="3.95" fill="#1f9cec" stroke="#1f9cec" stroke-width="0.14" font-style="italic">constraint</text><text x="117.65" y="366.23" font-size="3.5" fill="#e468e4" stroke="#e468e4" stroke-width="0.14" text-anchor="end">« fk »</text><rect x="62.5" y="367.95" width="56.25" height="0.35" fill="#6c7392"/><polygon points="84.22,369.4 86.03,370.4 84.22,371.4" fill="#3f96ea"/><rect x="83.62" y="369.5" width="0.7" height="1.8" fill="#3f96ea"/><polygon points="89.12,371.5 90.62,369.2 92.12,371.5" fill="#3f96ea"/><polygon points="94.53,369.4 97.33,369.4 95.92,371.5" fill="#3f96ea" opacity="0.45"/><rect x="323.35" y="205.2" width="57.75" height="45.4" fill="rgba(10,12,20,0.45)" rx="1.6"/><rect x="322.25" y="204" width="57.75" height="45.4" fill="#59607b" rx="1.6"/><path d="M322.25,210.2 v-4.6 a1.6,1.6 0 0 1 1.6,-1.6 h54.55 a1.6,1.6 0 0 1 1.6,1.6 v4.6 z" fill="#2e8bd9"/><text x="351.12" y="208.4" font-size="3.7" fill="#ffffff" stroke="#ffffff" stroke-width="0.14" font-weight="bold" font-style="italic" text-anchor="middle">table_d</text><polygon points="323.85,211.95 327.25,213.25 323.85,214.55" fill="#f2de3c"/><rect x="323.55" y="211.75" width="0.6" height="3" fill="#f2de3c"/><text x="328.25" y="214.5" font-size="3.5" fill="#52d652" stroke="#52d652" stroke-width="0.14" font-style="italic">id_a_table_a</text><text x="348.55" y="214.55" font-size="3.95" fill="#1f9cec" stroke="#1f9cec" stroke-width="0.14" font-style="italic">integer</text><text x="378.9" y="214.45" font-size="3.5" fill="#e468e4" stroke="#e468e4" stroke-width="0.14" text-anchor="end">« pk fk »</text><circle cx="325.45" cy="218.75" r="1.35" fill="#a4d4fa"/><text x="328.25" y="220" font-size="3.5" fill="#46c4a0" stroke="#46c4a0" stroke-width="0.14" font-style="italic">test_attrib</text><text x="348.55" y="220.05" font-size="3.95" fill="#1f9cec" stroke="#1f9cec" stroke-width="0.14" font-style="italic">smallint</text><text x="378.9" y="219.95" font-size="3.5" fill="#e468e4" stroke="#e468e4" stroke-width="0.14" text-anchor="end">« nn »</text><polygon points="323.55,224.25 324.95,223.65 325.45,222.45 325.95,223.65 327.35,224.25 325.95,224.85 325.45,226.05 324.95,224.85" fill="#4ad24a"/><circle cx="325.45" cy="224.25" r="0.9" fill="#4ad24a"/><text x="328.25" y="225.5" font-size="3.5" fill="#52d652" stroke="#52d652" stroke-width="0.14" font-style="italic">id_b_table_b</text><text x="348.55" y="225.55" font-size="3.95" fill="#1f9cec" stroke="#1f9cec" stroke-width="0.14" font-style="italic">integer</text><text x="378.9" y="225.45" font-size="3.5" fill="#e468e4" stroke="#e468e4" stroke-width="0.14" text-anchor="end">« fk nn »</text><rect x="322.25" y="227.15" width="57.75" height="0.35" fill="#6c7392"/><path d="M323.95,230.75 q0,-1.8 1.6,-1.8 q1.6,0 1.6,1.6 q0,1.4 -1.6,1.4 q-1.6,0 -1.6,-1.2 z" fill="#f29a62"/><circle cx="324.55" cy="230.05" r="0.7" fill="#f6b488"/><text x="328.25" y="231.6" font-size="3.4" fill="#3ccab6" stroke="#3ccab6" stroke-width="0.14" font-style="italic">table_d_pk</text><text x="348.55" y="231.65" font-size="3.95" fill="#1f9cec" stroke="#1f9cec" stroke-width="0.14" font-style="italic">constraint</text><text x="378.9" y="231.55" font-size="3.5" fill="#e468e4" stroke="#e468e4" stroke-width="0.14" text-anchor="end">« pk »</text><path d="M323.95,236.25 q0,-1.8 1.6,-1.8 q1.6,0 1.6,1.6 q0,1.4 -1.6,1.4 q-1.6,0 -1.6,-1.2 z" fill="#f29a62"/><circle cx="324.55" cy="235.55" r="0.7" fill="#f6b488"/><text x="328.25" y="237.1" font-size="3.4" fill="#3ccab6" stroke="#3ccab6" stroke-width="0.14" font-style="italic">table_a_fk</text><text x="348.55" y="237.15" font-size="3.95" fill="#1f9cec" stroke="#1f9cec" stroke-width="0.14" font-style="italic">constraint</text><text x="378.9" y="237.05" font-size="3.5" fill="#e468e4" stroke="#e468e4" stroke-width="0.14" text-anchor="end">« fk »</text><path d="M323.95,241.75 q0,-1.8 1.6,-1.8 q1.6,0 1.6,1.6 q0,1.4 -1.6,1.4 q-1.6,0 -1.6,-1.2 z" fill="#f29a62"/><circle cx="324.55" cy="241.05" r="0.7" fill="#f6b488"/><text x="328.25" y="242.6" font-size="3.4" fill="#3ccab6" stroke="#3ccab6" stroke-width="0.14" font-style="italic">table_b_fk</text><text x="348.55" y="242.65" font-size="3.95" fill="#1f9cec" stroke="#1f9cec" stroke-width="0.14" font-style="italic">constraint</text><text x="378.9" y="242.55" font-size="3.5" fill="#e468e4" stroke="#e468e4" stroke-width="0.14" text-anchor="end">« fk »</text><rect x="322.25" y="244.25" width="57.75" height="0.35" fill="#6c7392"/><polygon points="344.73,245.7 346.52,246.7 344.73,247.7" fill="#3f96ea"/><rect x="344.12" y="245.8" width="0.7" height="1.8" fill="#3f96ea"/><polygon points="349.62,247.8 351.12,245.5 352.62,247.8" fill="#3f96ea"/><polygon points="355.02,245.7 357.82,245.7 356.43,247.8" fill="#3f96ea" opacity="0.45"/><rect x="431.35" y="269.3" width="55.75" height="45" fill="rgba(10,12,20,0.45)" rx="1.6"/><rect x="430.25" y="268.1" width="55.75" height="45" fill="#59607b" rx="1.6"/><path d="M430.25,274.3 v-4.6 a1.6,1.6 0 0 1 1.6,-1.6 h52.55 a1.6,1.6 0 0 1 1.6,1.6 v4.6 z" fill="#2e8bd9"/><text x="458.12" y="272.5" font-size="3.7" fill="#ffffff" stroke="#ffffff" stroke-width="0.14" font-weight="bold" font-style="italic" text-anchor="middle">table_e</text><polygon points="431.85,276.02 435.25,277.32 431.85,278.62" fill="#f2de3c"/><rect x="431.55" y="275.82" width="0.6" height="3" fill="#f2de3c"/><text x="436.25" y="278.57" font-size="3.5" fill="#5ccc6c" stroke="#5ccc6c" stroke-width="0.14" font-style="italic">id_c</text><text x="454.65" y="278.62" font-size="3.95" fill="#1f9cec" stroke="#1f9cec" stroke-width="0.14" font-style="italic">integer</text><text x="484.9" y="278.52" font-size="3.5" fill="#e468e4" stroke="#e468e4" stroke-width="0.14" text-anchor="end">« pk »</text><circle cx="433.45" cy="282.75" r="1.35" fill="#eceef4"/><text x="436.25" y="284" font-size="3.5" fill="#5ccc6c" stroke="#5ccc6c" stroke-width="0.14" font-style="italic">name</text><text x="454.65" y="284.05" font-size="3.95" fill="#1f9cec" stroke="#1f9cec" stroke-width="0.14" font-style="italic">varchar(200)</text><circle cx="433.45" cy="288.18" r="1.35" fill="#eceef4"/><text x="436.25" y="289.43" font-size="3.5" fill="#5ccc6c" stroke="#5ccc6c" stroke-width="0.14" font-style="italic">date</text><text x="454.65" y="289.48" font-size="3.95" fill="#1f9cec" stroke="#1f9cec" stroke-width="0.14" font-style="italic">date</text><circle cx="433.45" cy="293.62" r="1.35" fill="#eceef4"/><text x="436.25" y="294.87" font-size="3.5" fill="#5ccc6c" stroke="#5ccc6c" stroke-width="0.14" font-style="italic">email</text><text x="454.65" y="294.92" font-size="3.95" fill="#1f9cec" stroke="#1f9cec" stroke-width="0.14" font-style="italic">public.email</text><circle cx="433.45" cy="299.05" r="1.35" fill="#eceef4"/><text x="436.25" y="300.3" font-size="3.5" fill="#5ccc6c" stroke="#5ccc6c" stroke-width="0.14" font-style="italic">id_f_table_f</text><text x="454.65" y="300.35" font-size="3.95" fill="#1f9cec" stroke="#1f9cec" stroke-width="0.14" font-style="italic">bigint</text><rect x="430.25" y="301.92" width="55.75" height="0.35" fill="#6c7392"/><path d="M431.95,305.48 q0,-1.8 1.6,-1.8 q1.6,0 1.6,1.6 q0,1.4 -1.6,1.4 q-1.6,0 -1.6,-1.2 z" fill="#f29a62"/><circle cx="432.55" cy="304.78" r="0.7" fill="#f6b488"/><text x="436.25" y="306.33" font-size="3.4" fill="#5ccc6c" stroke="#5ccc6c" stroke-width="0.14" font-style="italic">table_e_pk</text><text x="454.75" y="306.38" font-size="3.95" fill="#1f9cec" stroke="#1f9cec" stroke-width="0.14" font-style="italic">constraint</text><text x="484.9" y="306.28" font-size="3.5" fill="#e468e4" stroke="#e468e4" stroke-width="0.14" text-anchor="end">« pk »</text><rect x="430.25" y="307.95" width="55.75" height="0.35" fill="#6c7392"/><polygon points="451.73,309.4 453.52,310.4 451.73,311.4" fill="#3f96ea"/><rect x="451.12" y="309.5" width="0.7" height="1.8" fill="#3f96ea"/><polygon points="456.62,311.5 458.12,309.2 459.62,311.5" fill="#3f96ea"/><polygon points="462.02,309.4 464.82,309.4 463.43,311.5" fill="#3f96ea" opacity="0.45"/><rect x="299" y="323.1" width="62.7" height="62.1" fill="rgba(10,12,20,0.45)" rx="1.6"/><rect x="297.9" y="321.9" width="62.7" height="62.1" fill="#59607b" rx="1.6"/><path d="M297.9,328.1 v-4.6 a1.6,1.6 0 0 1 1.6,-1.6 h59.5 a1.6,1.6 0 0 1 1.6,1.6 v4.6 z" fill="#2e8bd9"/><text x="329.25" y="326.3" font-size="3.7" fill="#ffffff" stroke="#ffffff" stroke-width="0.14" font-weight="bold" font-style="italic" text-anchor="middle">table_h</text><polygon points="299.5,329.86 302.9,331.16 299.5,332.46" fill="#f2de3c"/><rect x="299.2" y="329.66" width="0.6" height="3" fill="#f2de3c"/><text x="303.9" y="332.41" font-size="3.5" fill="#42b4f0" stroke="#42b4f0" stroke-width="0.14" font-style="italic">id_h</text><text x="321" y="332.46" font-size="3.95" fill="#1f9cec" stroke="#1f9cec" stroke-width="0.14" font-style="italic">serial</text><text x="359.5" y="332.36" font-size="3.5" fill="#e468e4" stroke="#e468e4" stroke-width="0.14" text-anchor="end">« pk »</text><polygon points="299.2,336.68 300.6,336.08 301.1,334.88 301.6,336.08 303,336.68 301.6,337.28 301.1,338.48 300.6,337.28" fill="#4ad24a"/><circle cx="301.1" cy="336.68" r="0.9" fill="#4ad24a"/><text x="303.9" y="337.93" font-size="3.5" fill="#e6e8f0" stroke="#e6e8f0" stroke-width="0.14">table_e_id</text><text x="321" y="337.98" font-size="3.95" fill="#1f9cec" stroke="#1f9cec" stroke-width="0.14" font-style="italic">integer</text><text x="359.5" y="337.88" font-size="3.5" fill="#e468e4" stroke="#e468e4" stroke-width="0.14" text-anchor="end">« fk »</text><polygon points="299.2,342.21 300.6,341.61 301.1,340.41 301.6,341.61 303,342.21 301.6,342.81 301.1,344.01 300.6,342.81" fill="#4ad24a"/><circle cx="301.1" cy="342.21" r="0.9" fill="#4ad24a"/><text x="303.9" y="343.46" font-size="3.5" fill="#e6e8f0" stroke="#e6e8f0" stroke-width="0.14">table_d_id</text><text x="321" y="343.51" font-size="3.95" fill="#1f9cec" stroke="#1f9cec" stroke-width="0.14" font-style="italic">integer</text><text x="359.5" y="343.41" font-size="3.5" fill="#e468e4" stroke="#e468e4" stroke-width="0.14" text-anchor="end">« fk »</text><polygon points="299.2,347.73 300.6,347.13 301.1,345.93 301.6,347.13 303,347.73 301.6,348.33 301.1,349.53 300.6,348.33" fill="#4ad24a"/><circle cx="301.1" cy="347.73" r="0.9" fill="#4ad24a"/><text x="303.9" y="348.98" font-size="3.5" fill="#e6e8f0" stroke="#e6e8f0" stroke-width="0.14">table_f_id</text><text x="321" y="349.03" font-size="3.95" fill="#1f9cec" stroke="#1f9cec" stroke-width="0.14" font-style="italic">integer</text><text x="359.5" y="348.93" font-size="3.5" fill="#e468e4" stroke="#e468e4" stroke-width="0.14" text-anchor="end">« fk »</text><rect x="297.9" y="350.64" width="62.7" height="0.35" fill="#6c7392"/><path d="M299.6,354.25 q0,-1.8 1.6,-1.8 q1.6,0 1.6,1.6 q0,1.4 -1.6,1.4 q-1.6,0 -1.6,-1.2 z" fill="#f29a62"/><circle cx="300.2" cy="353.55" r="0.7" fill="#f6b488"/><text x="303.9" y="355.1" font-size="3.4" fill="#3ccab6" stroke="#3ccab6" stroke-width="0.14" font-style="italic">table_h_pk</text><text x="328.8" y="355.15" font-size="3.95" fill="#1f9cec" stroke="#1f9cec" stroke-width="0.14" font-style="italic">constraint</text><text x="359.5" y="355.05" font-size="3.5" fill="#e468e4" stroke="#e468e4" stroke-width="0.14" text-anchor="end">« pk »</text><path d="M299.6,359.77 q0,-1.8 1.6,-1.8 q1.6,0 1.6,1.6 q0,1.4 -1.6,1.4 q-1.6,0 -1.6,-1.2 z" fill="#f29a62"/><circle cx="300.2" cy="359.07" r="0.7" fill="#f6b488"/><text x="303.9" y="360.62" font-size="3.4" fill="#3ccab6" stroke="#3ccab6" stroke-width="0.14" font-style="italic">table_e_fk</text><text x="328.8" y="360.67" font-size="3.95" fill="#1f9cec" stroke="#1f9cec" stroke-width="0.14" font-style="italic">constraint</text><text x="359.5" y="360.57" font-size="3.5" fill="#e468e4" stroke="#e468e4" stroke-width="0.14" text-anchor="end">« fk »</text><path d="M299.6,365.29 q0,-1.8 1.6,-1.8 q1.6,0 1.6,1.6 q0,1.4 -1.6,1.4 q-1.6,0 -1.6,-1.2 z" fill="#f29a62"/><circle cx="300.2" cy="364.59" r="0.7" fill="#f6b488"/><text x="303.9" y="366.14" font-size="3.4" fill="#3ccab6" stroke="#3ccab6" stroke-width="0.14" font-style="italic">table_g_fk</text><text x="328.8" y="366.19" font-size="3.95" fill="#1f9cec" stroke="#1f9cec" stroke-width="0.14" font-style="italic">constraint</text><text x="359.5" y="366.09" font-size="3.5" fill="#e468e4" stroke="#e468e4" stroke-width="0.14" text-anchor="end">« fk »</text><path d="M299.6,370.82 q0,-1.8 1.6,-1.8 q1.6,0 1.6,1.6 q0,1.4 -1.6,1.4 q-1.6,0 -1.6,-1.2 z" fill="#f29a62"/><circle cx="300.2" cy="370.12" r="0.7" fill="#f6b488"/><text x="303.9" y="371.67" font-size="3.4" fill="#3ccab6" stroke="#3ccab6" stroke-width="0.14" font-style="italic">table_f_fk</text><text x="328.8" y="371.72" font-size="3.95" fill="#1f9cec" stroke="#1f9cec" stroke-width="0.14" font-style="italic">constraint</text><text x="359.5" y="371.62" font-size="3.5" fill="#e468e4" stroke="#e468e4" stroke-width="0.14" text-anchor="end">« fk »</text><path d="M299.6,376.34 q0,-1.8 1.6,-1.8 q1.6,0 1.6,1.6 q0,1.4 -1.6,1.4 q-1.6,0 -1.6,-1.2 z" fill="#f29a62"/><text x="303.9" y="377.19" font-size="3.4" fill="#3ccab6" stroke="#3ccab6" stroke-width="0.14" font-style="italic">dummy_trigger</text><text x="328.8" y="377.24" font-size="3.95" fill="#1f9cec" stroke="#1f9cec" stroke-width="0.14" font-style="italic">trigger</text><text x="359.5" y="377.14" font-size="3.5" fill="#e468e4" stroke="#e468e4" stroke-width="0.14" text-anchor="end">« b i »</text><rect x="297.9" y="378.85" width="62.7" height="0.35" fill="#6c7392"/><polygon points="322.85,380.3 324.65,381.3 322.85,382.3" fill="#3f96ea"/><rect x="322.25" y="380.4" width="0.7" height="1.8" fill="#3f96ea"/><polygon points="327.75,382.4 329.25,380.1 330.75,382.4" fill="#3f96ea"/><polygon points="333.15,380.3 335.95,380.3 334.55,382.4" fill="#3f96ea" opacity="0.45"/><rect x="421.35" y="357.2" width="54.75" height="23.75" fill="rgba(10,12,20,0.45)" rx="1.6"/><rect x="420.25" y="356" width="54.75" height="23.75" fill="#59607b" rx="1.6"/><path d="M420.25,362.2 v-4.6 a1.6,1.6 0 0 1 1.6,-1.6 h51.55 a1.6,1.6 0 0 1 1.6,1.6 v4.6 z" fill="#2e8bd9"/><text x="447.62" y="360.4" font-size="3.7" fill="#ffffff" stroke="#ffffff" stroke-width="0.14" font-weight="bold" font-style="italic" text-anchor="middle">table_f</text><polygon points="421.85,364.04 425.25,365.34 421.85,366.64" fill="#f2de3c"/><rect x="421.55" y="363.84" width="0.6" height="3" fill="#f2de3c"/><text x="426.25" y="366.59" font-size="3.5" fill="#42b4f0" stroke="#42b4f0" stroke-width="0.14" font-style="italic">id_f</text><text x="434.05" y="366.64" font-size="3.95" fill="#1f9cec" stroke="#1f9cec" stroke-width="0.14" font-style="italic">bigserial</text><text x="473.9" y="366.54" font-size="3.5" fill="#e468e4" stroke="#e468e4" stroke-width="0.14" text-anchor="end">« pk »</text><rect x="420.25" y="368.33" width="54.75" height="0.35" fill="#6c7392"/><path d="M421.95,372.01 q0,-1.8 1.6,-1.8 q1.6,0 1.6,1.6 q0,1.4 -1.6,1.4 q-1.6,0 -1.6,-1.2 z" fill="#f29a62"/><circle cx="422.55" cy="371.31" r="0.7" fill="#f6b488"/><text x="426.25" y="372.86" font-size="3.4" fill="#3ccab6" stroke="#3ccab6" stroke-width="0.14" font-style="italic">table_f_pk</text><text x="443.15" y="372.91" font-size="3.95" fill="#1f9cec" stroke="#1f9cec" stroke-width="0.14" font-style="italic">constraint</text><text x="473.9" y="372.81" font-size="3.5" fill="#e468e4" stroke="#e468e4" stroke-width="0.14" text-anchor="end">« pk »</text><rect x="420.25" y="374.6" width="54.75" height="0.35" fill="#6c7392"/><polygon points="441.23,376.05 443.02,377.05 441.23,378.05" fill="#3f96ea"/><rect x="440.62" y="376.15" width="0.7" height="1.8" fill="#3f96ea"/><polygon points="446.12,378.15 447.62,375.85 449.12,378.15" fill="#3f96ea"/><polygon points="451.52,376.05 454.32,376.05 452.93,378.15" fill="#3f96ea" opacity="0.45"/></svg>
<div class="vscroll"><svg class="ic" style="left:0;top:0" width="5.8" height="370" viewBox="0 0 5.8 370"><polygon points="1.2,2.8 2.9,0.9 4.6,2.8" fill="#e4e6ee"/><rect x="1.2" y="2.8" width="3.4" height="0.6" fill="#e4e6ee"/><polygon points="1.2,366.4 2.9,368.3 4.6,366.4" fill="#e4e6ee"/><rect x="1.2" y="365.8" width="3.4" height="0.6" fill="#e4e6ee"/></svg></div>
<div class="vsep"></div>
<div class="split"></div>
<div class="panel">
<div class="ptitle">Model objects</div>
<svg class="ic" style="left:132px;top:3.6px" width="7" height="7" viewBox="0 0 7 7"><path d="M1,1 L5.8,5.8 M5.8,1 L1,5.8" stroke="#f0443a" stroke-width="1.25" fill="none"/></svg>
<div class="treebox"><div class="tscroll"><div class="tthumb"></div><svg class="ic" style="left:0;top:0" width="4.4" height="342.4" viewBox="0 0 4.4 342.4"><polygon points="0.8,3.2 2.2,1.5 3.6,3.2" fill="#e4e6ee"/><polygon points="0.8,339 2.2,340.7 3.6,339" fill="#e4e6ee"/></svg></div></div>
<div class="pbtn" style="left:101px"></div>
<div class="pbtn" style="left:114.2px"></div>
<div class="pbtn" style="left:127.6px"></div>
<svg class="ic" style="left:99px;top:359px" width="42" height="14" viewBox="726 375 42 14"><path d="M730,378.4 h7.6 l-2.8,3.4 v3.4 l-2,-1 v-2.4 z" fill="#f5e14a"/><rect x="743.4" y="378.2" width="3" height="0.9" fill="#e8303c"/><path d="M744.9,380 v5.4" fill="none" stroke="#e8e8e8" stroke-width="0.7"/><polygon points="743.8,381.4 744.9,380 746,381.4" fill="#e8e8e8"/><rect x="747.2" y="380.4" width="4.6" height="0.9" fill="#f5e14a"/><rect x="747.2" y="382.4" width="4.6" height="0.9" fill="#f5e14a"/><rect x="747.2" y="384.4" width="4.6" height="0.9" fill="#f5e14a"/><rect x="756.8" y="378.2" width="3" height="0.9" fill="#e8303c"/><path d="M758.3,380 v5.4" fill="none" stroke="#e8e8e8" stroke-width="0.7"/><polygon points="757.2,381.4 758.3,380 759.4,381.4" fill="#e8e8e8"/><rect x="760.6" y="380.4" width="4.6" height="0.9" fill="#f5e14a"/><rect x="760.6" y="382.4" width="4.6" height="0.9" fill="#f5e14a"/><rect x="760.6" y="384.4" width="4.6" height="0.9" fill="#f5e14a"/></svg>
</div>
</div>
<div class="sidebar">
<div class="sel"></div>
<svg class="ic " style="left:0px;top:16px" width="32" height="350" viewBox="0 16 32 350"><g transform="translate(9.6,19.2) scale(0.98)"><path d="M1,3.2 C1,0.8 3,0 5,0 C7.4,0 8.6,1.4 8.4,3.6 C8.3,5.2 7.6,6.6 7.2,7.6 C7,8.6 7.6,9.2 8.6,9 L8.8,9.9 C7,10.4 5.8,9.6 6,8 L5.4,6.6 C4.6,7.4 3.4,7.6 2.4,7 C1.2,6.2 1,4.6 1,3.2 z" fill="#e4e6ea"/><path d="M3.2,1.6 C4,1.2 4.8,1.6 4.8,2.6 L4.6,5.6" fill="none" stroke="#8a90a0" stroke-width="0.5"/><circle cx="5.9" cy="2.6" r="0.4" fill="#444"/></g><rect x="9" y="29" width="3.5" height="3.4" fill="#4cc6f0" rx="0.4"/><rect x="14.2" y="29" width="3.5" height="3.4" fill="#d85ae0" rx="0.4"/><rect x="18.8" y="29" width="3.5" height="3.4" fill="#4bd05a" rx="0.4"/><rect x="9.2" y="46" width="13.2" height="12.8" fill="#f2f2f2" rx="0.8"/><rect x="10" y="46.8" width="2" height="1.8" fill="#9ea2aa"/><rect x="13" y="46.8" width="2.6" height="1.8" fill="#b4b8c0"/><rect x="16.2" y="46.8" width="2.6" height="1.8" fill="#b4b8c0"/><rect x="19.4" y="46.8" width="2.2" height="1.8" fill="#b4b8c0"/><rect x="10" y="49.6" width="2" height="2.4" fill="#b4b8c0"/><rect x="10" y="52.8" width="2" height="2.4" fill="#b4b8c0"/><rect x="10" y="56" width="2" height="2" fill="#b4b8c0"/><rect x="13.6" y="50.2" width="3.4" height="3.4" fill="#38c0f0" rx="0.4"/><circle cx="19.6" cy="51.6" r="1.8" fill="#3fcf4f"/><circle cx="15.2" cy="56" r="1.7" fill="#e8303c"/><path d="M17.6,56 l1.2,1.4 l2.2,-3" fill="none" stroke="#e8c83c" stroke-width="0.9"/><path d="M10,74.2 a4.8,1.4 0 0 1 9.6,0 v9.8 a4.8,1.4 0 0 1 -9.6,0 z" fill="#ececec"/><path d="M10,77.47 a4.8,1.4 0 0 0 9.6,0" fill="none" stroke="#9aa0aa" stroke-width="0.45"/><path d="M10,80.73 a4.8,1.4 0 0 0 9.6,0" fill="none" stroke="#9aa0aa" stroke-width="0.45"/><path d="M15.6,85.6 l5.6,-5.4" fill="none" stroke="#e8403c" stroke-width="1.2"/><path d="M16,80.4 l5.4,5.4" fill="none" stroke="#9adcf4" stroke-width="1.2"/><circle cx="21" cy="80.4" r="1" fill="#c8ccd2"/><path d="M9.2,100.52 a3.2,1.32 0 0 1 6.4,0 v3.96 a3.2,1.32 0 0 1 -6.4,0 z" fill="#d8dade"/><path d="M9.2,101.84 a3.2,1.32 0 0 0 6.4,0" fill="none" stroke="#9aa0aa" stroke-width="0.45"/><path d="M9.2,103.16 a3.2,1.32 0 0 0 6.4,0" fill="none" stroke="#9aa0aa" stroke-width="0.45"/><path d="M16.4,100.4 h3.8 v2.8" fill="none" stroke="#38c0f0" stroke-width="1.3"/><polygon points="18.2,102.8 22.2,102.8 20.2,105" fill="#38c0f0"/><rect x="15" y="106" width="7.6" height="6" fill="#f2f2f2" rx="0.5"/><circle cx="17" cy="108.2" r="1" fill="#e8403c"/><polygon points="17.2,111.2 18.8,108.2 20.2,111.2" fill="#3cc85a"/><polygon points="19.2,111.2 20.6,108.8 21.8,111.2" fill="#3a90e8"/><rect x="9" y="125.6" width="7.6" height="6" fill="#f2f2f2" rx="0.5"/><circle cx="11" cy="127.8" r="1" fill="#e8403c"/><polygon points="11.2,130.8 12.8,127.8 14.2,130.8" fill="#3cc85a"/><polygon points="13.2,130.8 14.6,128.4 15.8,130.8" fill="#3a90e8"/><path d="M17,126.6 h3.8 v2.8" fill="none" stroke="#3fcf4f" stroke-width="1.3"/><polygon points="18.8,129 22.8,129 20.8,131.2" fill="#3fcf4f"/><path d="M16,133.52 a3.2,1.32 0 0 1 6.4,0 v3.96 a3.2,1.32 0 0 1 -6.4,0 z" fill="#d8dade"/><path d="M16,134.84 a3.2,1.32 0 0 0 6.4,0" fill="none" stroke="#9aa0aa" stroke-width="0.45"/><path d="M16,136.16 a3.2,1.32 0 0 0 6.4,0" fill="none" stroke="#9aa0aa" stroke-width="0.45"/><rect x="9" y="152.2" width="7.6" height="6" fill="#f2f2f2" rx="0.5"/><circle cx="11" cy="154.4" r="1" fill="#e8403c"/><polygon points="11.2,157.4 12.8,154.4 14.2,157.4" fill="#3cc85a"/><polygon points="13.2,157.4 14.6,155 15.8,157.4" fill="#3a90e8"/><path d="M17.4,153 h3.6 v3" fill="none" stroke="#3fcf4f" stroke-width="1.3"/><polygon points="19,155.6 23,155.6 21,157.8" fill="#3fcf4f"/><path d="M9.8,159.4 v3.8 h3.6" fill="none" stroke="#e8403c" stroke-width="1.3"/><polygon points="13,161.2 13,165.2 15.2,163.2" fill="#e8403c"/><path d="M16.4,160.08 a3.1,1.28 0 0 1 6.2,0 v3.84 a3.1,1.28 0 0 1 -6.2,0 z" fill="#d8dade"/><path d="M16.4,161.36 a3.1,1.28 0 0 0 6.2,0" fill="none" stroke="#9aa0aa" stroke-width="0.45"/><path d="M16.4,162.64 a3.1,1.28 0 0 0 6.2,0" fill="none" stroke="#9aa0aa" stroke-width="0.45"/><path d="M11.6,181.6 l9,9" fill="none" stroke="#f0f0f0" stroke-width="1.7" stroke-linecap="round"/><circle cx="10.8" cy="180.8" r="2" fill="none" stroke="#f0f0f0" stroke-width="1.3" stroke-dasharray="9.4 3.2" stroke-dashoffset="-4"/><circle cx="21.2" cy="191" r="2" fill="none" stroke="#f0f0f0" stroke-width="1.3" stroke-dasharray="9.4 3.2" stroke-dashoffset="2.4"/><path d="M21.6,180 l-6.4,6.4" fill="none" stroke="#e4e6ea" stroke-width="0.9"/><path d="M15.2,186.4 l-5,5" fill="none" stroke="#e8403c" stroke-width="2" stroke-linecap="round"/><rect x="9.4" y="205.6" width="13" height="12.8" fill="#ecebe6" rx="0.8"/><path d="M11.9,207 v7.2 M15.9,207 v7.2 M19.9,207 v7.2" fill="none" stroke="#8a8a86" stroke-width="0.6"/><rect x="10.8" y="210" width="2.2" height="1.6" fill="#e8c83c" rx="0.3"/><rect x="14.8" y="208" width="2.2" height="1.6" fill="#e8c83c" rx="0.3"/><rect x="18.8" y="211" width="2.2" height="1.6" fill="#e8c83c" rx="0.3"/><rect x="10.9" y="215.4" width="2" height="1.8" fill="#e8303c"/><rect x="14.9" y="215.4" width="2" height="1.8" fill="#3cc85a"/><rect x="18.9" y="215.4" width="2" height="1.8" fill="#e8303c"/><rect x="9" y="235" width="11" height="10.8" fill="#f0f0f0" rx="0.8"/><rect x="10.2" y="236.2" width="3.6" height="3.6" fill="#38c0f0" rx="0.3"/><circle cx="17" cy="238" r="1.9" fill="#3fcf4f"/><circle cx="12" cy="243" r="1.7" fill="#e8303c"/><path d="M15,244.6 l2,-3" fill="none" stroke="#e8c83c" stroke-width="0.9"/><circle cx="19.6" cy="244.6" r="2.9" fill="#3fcf4f"/><path d="M19.6,242.8 v3.6 M17.8,244.6 h3.6" fill="none" stroke="#1f8a2f" stroke-width="0.7"/><polygon points="27.6,243.8 29.8,245.3 27.6,246.8" fill="#e0e0e0"/><rect x="13.9" y="262.2" width="2.6" height="3" fill="#f0f0f0" transform="rotate(0 15.2 267.6)"/><rect x="13.9" y="262.2" width="2.6" height="3" fill="#f0f0f0" transform="rotate(45 15.2 267.6)"/><rect x="13.9" y="262.2" width="2.6" height="3" fill="#f0f0f0" transform="rotate(90 15.2 267.6)"/><rect x="13.9" y="262.2" width="2.6" height="3" fill="#f0f0f0" transform="rotate(135 15.2 267.6)"/><rect x="13.9" y="262.2" width="2.6" height="3" fill="#f0f0f0" transform="rotate(180 15.2 267.6)"/><rect x="13.9" y="262.2" width="2.6" height="3" fill="#f0f0f0" transform="rotate(225 15.2 267.6)"/><rect x="13.9" y="262.2" width="2.6" height="3" fill="#f0f0f0" transform="rotate(270 15.2 267.6)"/><rect x="13.9" y="262.2" width="2.6" height="3" fill="#f0f0f0" transform="rotate(315 15.2 267.6)"/><circle cx="15.2" cy="267.6" r="4.2" fill="#f0f0f0"/><circle cx="15.2" cy="267.6" r="2.18" fill="#171c26"/><polygon points="20,264.6 16.8,270 18.8,270 17.4,275 22,268.2 19.9,268.2 21.6,264.6" fill="#f5e14a" stroke="#171c26" stroke-width="0.4"/><polygon points="27.6,270.2 29.8,271.7 27.6,273.2" fill="#e0e0e0"/><rect x="9.2" y="288" width="9.8" height="10.6" fill="#f2f2f2" rx="0.6"/><rect x="10.8" y="290" width="6.6" height="0.7" fill="#aaa"/><rect x="10.8" y="291.8" width="6.6" height="0.7" fill="#aaa"/><rect x="10.8" y="293.6" width="4.6" height="0.7" fill="#aaa"/><path d="M21.4,295 l-4.4,4.6" fill="none" stroke="#f0dc3c" stroke-width="1.7"/><path d="M22.2,294.2 l-0.9,0.9" fill="none" stroke="#e8303c" stroke-width="1.7"/><polygon points="16.2,300.8 16.6,299 17.8,300.2" fill="#e8e8e8"/><path d="M12.6,316 a1.2,1.2 0 0 1 1.2,-1.2 h7.4 a1.2,1.2 0 0 1 1.2,1.2 h-2.2 v9.6 a1.6,1.6 0 0 1 -1.6,1.6 h-7 a1.6,1.6 0 0 1 -1.6,-1.6 a1.6,1.6 0 0 1 1.6,-1.6 h1 z" fill="#f2f2f2"/><rect x="13.8" y="317.6" width="4.6" height="0.6" fill="#999"/><rect x="13.8" y="319.2" width="4.6" height="0.6" fill="#999"/><rect x="13.8" y="320.8" width="4.6" height="0.6" fill="#999"/><rect x="11" y="324.6" width="7" height="0.5" fill="#aaa"/><rect x="9.6" y="342.8" width="9.4" height="1.2" fill="#f0f0f0" rx="0.3"/><rect x="9.6" y="346.2" width="9.4" height="1.2" fill="#f0f0f0" rx="0.3"/><rect x="9.6" y="349.6" width="6.4" height="1.2" fill="#f0f0f0" rx="0.3"/><circle cx="19.4" cy="350.2" r="2.7" fill="#3fcf4f"/><path d="M19.4,348.6 v3.2 M17.8,350.2 h3.2" fill="none" stroke="#1f8a2f" stroke-width="0.7"/><polygon points="27.6,349.6 29.8,351.1 27.6,352.6" fill="#e0e0e0"/></svg>
<div class="sidesep"></div>
<div class="slabel" style="top:33.5px">Welcome</div>
<div class="slabel" style="top:60.2px">Design</div>
<div class="slabel" style="top:86.7px">Manage</div>
<div class="slabel" style="top:114.1px">Import</div>
<div class="slabel" style="top:140px">Export</div>
<div class="slabel" style="top:166.6px">Diff</div>
<div class="slabel" style="top:193.3px">Fix</div>
<div class="slabel" style="top:219.7px">Configure</div>
<div class="slabel" style="top:250.1px">New</div>
<div class="slabel" style="top:275.7px">Quick</div>
<div class="slabel" style="top:303.1px">Properties</div>
<div class="slabel" style="top:329px">Source</div>
<div class="slabel" style="top:355.5px">More</div>
</div>
<div class="toolbar">
<svg class="ic " style="left:0px;top:0px" width="620" height="16" viewBox="0 0 620 16"><rect x="3.8" y="4.1" width="8.8" height="1.5" fill="#e6e6e6" rx="0.3"/><rect x="3.8" y="7.5" width="8.8" height="1.5" fill="#e6e6e6" rx="0.3"/><rect x="3.8" y="10.9" width="8.8" height="1.5" fill="#e6e6e6" rx="0.3"/><path d="M20,2.6 h5.9 l2.5,2.5 v8.1 h-8.4 z" fill="#f2f2f2"/><polygon points="27.8,7.3 28.67,9.4 30.94,9.58 29.21,11.06 29.74,13.27 27.8,12.08 25.86,13.27 26.39,11.06 24.66,9.58 26.93,9.4" fill="#f5e14a"/><rect x="38.5" y="2.5" width="5.2" height="4.6" fill="#f2f2f2" rx="0.3"/><rect x="39.5" y="3.6" width="2.8" height="0.5" fill="#b0b4ba"/><path d="M36.3,5.2 h9.6 l-1,7.6 h-7.6 z" fill="#f5e14a"/><rect x="36.3" y="4.4" width="3.5" height="1.5" fill="#e8cf3a" rx="0.3"/><circle cx="44.6" cy="10.9" r="2.5" fill="#38b8e8"/><path d="M44.6,9.6 v1.4 h1" fill="none" stroke="#0e5a80" stroke-width="0.5"/><rect x="56" y="2.5" width="5.6" height="4.6" fill="#f2f2f2" rx="0.3"/><rect x="57" y="3.6" width="3.2" height="0.5" fill="#b0b4ba"/><path d="M53.8,5.2 h10 l-1,7.8 h-8 z" fill="#f5e14a"/><rect x="53.8" y="4.4" width="3.5" height="1.5" fill="#e8cf3a" rx="0.3"/><path d="M71.6,4.4 h6.8 l1.6,3.7 h-10 z" fill="#555a66"/><rect x="70" y="8.1" width="10" height="5.1" fill="#5d626e" rx="0.4"/><rect x="70" y="10.45" width="10" height="0.4" fill="rgba(0,0,0,0.25)"/><path d="M74,2.2 h2 v3 h1.7 l-2.7,3 l-2.7,-3 h1.7 z" fill="#3a3e49"/><path d="M88.6,4.4 h6.8 l1.6,3.7 h-10 z" fill="#cdd6dc"/><rect x="87" y="8.1" width="10" height="5.1" fill="#e4eaee" rx="0.4"/><rect x="87" y="10.45" width="10" height="0.4" fill="rgba(0,0,0,0.25)"/><path d="M91,2.2 h2 v3 h1.7 l-2.7,3 l-2.7,-3 h1.7 z" fill="#3fcf4f"/><rect x="87.6" y="8.7" width="4" height="1.7" fill="#58c8ec"/><path d="M105.4,4.4 h5.4 l1.6,3.11 h-8.6 z" fill="#cdd6dc"/><rect x="103.8" y="7.51" width="8.6" height="4.29" fill="#e4eaee" rx="0.4"/><rect x="103.8" y="9.45" width="8.6" height="0.4" fill="rgba(0,0,0,0.25)"/><path d="M107.1,2.2 h2 v3 h1.7 l-2.7,3 l-2.7,-3 h1.7 z" fill="#c050e0"/><rect x="104.4" y="8" width="3.4" height="1.5" fill="#58c8ec"/><rect x="110.4" y="8.6" width="4.2" height="5" fill="#f4f4f4" rx="0.8" stroke="#171c26" stroke-width="0.5"/><rect x="123" y="2.8" width="5.4" height="3.4" fill="#f0f0f0" rx="0.3"/><rect x="121" y="5.6" width="9.4" height="5" fill="#c8ccd2" rx="0.8"/><rect x="123" y="9.2" width="5.4" height="4" fill="#f4f4f4" rx="0.3"/><rect x="123.8" y="10.4" width="3.8" height="0.5" fill="#999"/><rect x="123.8" y="11.6" width="3.8" height="0.5" fill="#999"/><rect x="134.3" y="1.5" width="0.6" height="13" fill="#2c3142"/><line x1="143.81" y1="8.61" x2="147.41" y2="12.21" stroke="#2a7d96" stroke-width="1.1" stroke-linecap="round"/><circle cx="141.5" cy="6.3" r="3.3" fill="#bfeaf5"/><rect x="139.8" y="5.9" width="3.4" height="0.8" fill="#5aa8c0"/><line x1="160.91" y1="8.61" x2="164.51" y2="12.21" stroke="#2a7d96" stroke-width="1.1" stroke-linecap="round"/><circle cx="158.6" cy="6.3" r="3.3" fill="#bfeaf5"/><text x="158.6" y="7.4" font-size="3.2" font-weight="bold" text-anchor="middle" fill="#4a98b0" font-family="Liberation Sans, sans-serif">1:1</text><line x1="177.71" y1="8.61" x2="181.31" y2="12.21" stroke="#2a7d96" stroke-width="1.1" stroke-linecap="round"/><circle cx="175.4" cy="6.3" r="3.3" fill="#bfeaf5"/><rect x="173.7" y="5.9" width="3.4" height="0.8" fill="#5aa8c0"/><rect x="175" y="4.6" width="0.8" height="3.4" fill="#5aa8c0"/><rect x="184.8" y="1.5" width="0.6" height="13" fill="#2c3142"/><line x1="194.68" y1="8.58" x2="198.28" y2="12.18" stroke="#2a7d96" stroke-width="1.1" stroke-linecap="round"/><circle cx="192.3" cy="6.2" r="3.4" fill="#bfeaf5"/><circle cx="191.3" cy="5.4" r="1.2" fill="#e8403c"/><circle cx="193.5" cy="6.4" r="1.3" fill="#3cc85a"/><circle cx="191.7" cy="7.5" r="1" fill="#4ea0f0"/><path d="M208.6,3 h1.6 l0.8,6 h-4 z" fill="#f2f2f2"/><path d="M212.2,3 h1.6 l1.6,6 h-4 z" fill="#f2f2f2"/><circle cx="208.6" cy="10.6" r="2.3" fill="#bfeaf5"/><circle cx="213.8" cy="10.6" r="2.3" fill="#bfeaf5"/><rect x="210.4" y="5.4" width="1.6" height="2" fill="#cfd4da"/><rect x="221.2" y="1.2" width="13.6" height="13.8" fill="#1d72b0" rx="1.2" stroke="#2a90da" stroke-width="0.8"/><rect x="222.9" y="3.1" width="3.03" height="2.97" fill="#f2f2f2"/><rect x="222.9" y="6.62" width="3.03" height="2.97" fill="#f2f2f2"/><rect x="222.9" y="10.13" width="3.03" height="2.97" fill="#f2f2f2"/><rect x="226.48" y="3.1" width="3.03" height="2.97" fill="#f2f2f2"/><rect x="226.48" y="6.62" width="3.03" height="2.97" fill="#f2f2f2"/><rect x="226.48" y="10.13" width="3.03" height="2.97" fill="#f2f2f2"/><rect x="230.07" y="3.1" width="3.03" height="2.97" fill="#f2f2f2"/><rect x="230.07" y="6.62" width="3.03" height="2.97" fill="#f2f2f2"/><rect x="230.07" y="10.13" width="3.03" height="2.97" fill="#f2f2f2"/><rect x="238" y="1.2" width="13.6" height="13.8" fill="#1d72b0" rx="1.2" stroke="#2a90da" stroke-width="0.8"/><rect x="239.6" y="2.6" width="10.4" height="10.6" fill="#2a86c8" rx="0.6"/><rect x="240.2" y="3.3" width="2.6" height="2.53" fill="#f2f2f2"/><rect x="240.2" y="6.33" width="2.6" height="2.53" fill="#f2f2f2"/><rect x="240.2" y="9.37" width="2.6" height="2.53" fill="#f2f2f2"/><rect x="243.3" y="3.3" width="2.6" height="2.53" fill="#f2f2f2"/><rect x="243.3" y="6.33" width="2.6" height="2.53" fill="#f2f2f2"/><rect x="243.3" y="9.37" width="2.6" height="2.53" fill="#f2f2f2"/><rect x="246.4" y="3.3" width="2.6" height="2.53" fill="#f2f2f2"/><rect x="246.4" y="6.33" width="2.6" height="2.53" fill="#f2f2f2"/><rect x="246.4" y="9.37" width="2.6" height="2.53" fill="#f2f2f2"/><rect x="254.6" y="1.2" width="14" height="13.8" fill="#1d72b0" rx="1.2" stroke="#2a90da" stroke-width="0.8"/><rect x="256.4" y="3" width="10.4" height="10.4" fill="#2a86c8" rx="0.4" stroke="#55aee8" stroke-width="0.4" stroke-dasharray="0.8 0.8"/><line x1="258.4" y1="11.4" x2="265.4" y2="4.4" stroke="#f2f2f2" stroke-width="1.1" stroke-linecap="round"/><rect x="258.6" y="4.4" width="3.6" height="2.4" fill="#e8d040" rx="0.5"/><circle cx="258.4" cy="11.4" r="0.9" fill="#f2f2f2"/><rect x="273" y="3" width="2.4" height="2.4" fill="#f2f2f2"/><rect x="273" y="5.9" width="2.4" height="2.4" fill="#f2f2f2"/><rect x="273" y="8.8" width="2.4" height="2.4" fill="#f2f2f2"/><rect x="275.9" y="3" width="2.4" height="2.4" fill="#f2f2f2"/><rect x="275.9" y="5.9" width="2.4" height="2.4" fill="#f2f2f2"/><rect x="275.9" y="8.8" width="2.4" height="2.4" fill="#f2f2f2"/><rect x="278.8" y="3" width="2.4" height="2.4" fill="#f2f2f2"/><rect x="278.8" y="5.9" width="2.4" height="2.4" fill="#f2f2f2"/><rect x="278.8" y="8.8" width="2.4" height="2.4" fill="#f2f2f2"/><path d="M279.4,9 v1.6 a2,2 0 0 0 4,0 v-1.6" fill="none" stroke="#e8303c" stroke-width="1.5"/><rect x="291.6" y="4.4" width="7.4" height="7" fill="#f2f2f2" rx="0.4"/><circle cx="293.6" cy="6.8" r="1" fill="#e8403c"/><polygon points="294,10.4 295.6,7.2 297.2,10.4" fill="#3cc85a"/><polygon points="296,10.4 297.4,7.8 298.6,10.4" fill="#3a90e8"/><path d="M290,5 v-1.8 h1.8 M298.8,3.2 h1.8 v1.8 M300.6,10.8 v1.8 h-1.8 M291.8,12.6 h-1.8 v-1.8" fill="none" stroke="#f2f2f2" stroke-width="0.7"/><rect x="306.8" y="3.2" width="4" height="1.2" fill="#58c8ec"/><rect x="306.8" y="4.4" width="4" height="1.8" fill="#f2f2f2"/><rect x="313.4" y="3.2" width="4" height="1.2" fill="#58c8ec"/><rect x="313.4" y="4.4" width="4" height="1.8" fill="#f2f2f2"/><rect x="313.4" y="9.4" width="4" height="1.2" fill="#58c8ec"/><rect x="313.4" y="10.6" width="4" height="2" fill="#f2f2f2"/><path d="M308.8,6.2 v5 h4.6 M310.8,4.8 h2.6" fill="none" stroke="#98a0ac" stroke-width="0.6"/><rect x="310.8" y="7.2" width="2.2" height="1.6" fill="#98a0ac"/><rect x="325.6" y="3.2" width="8.6" height="8.6" fill="#4cc6f0" rx="0.3"/><rect x="323.4" y="8.8" width="4.2" height="4.2" fill="#bfeaf5" rx="0.2" stroke="#171c26" stroke-width="0.4"/><path d="M329.2,6.8 l1.2,1.2 l2.2,-2.8" fill="none" stroke="#2a86b8" stroke-width="0.7"/><rect x="337.1" y="1.5" width="0.6" height="13" fill="#2c3142"/><polygon points="341.8,8 351,3.2 351,12.8" fill="#48c8f4"/><polygon points="368.6,8 359.8,3.4 359.8,12.6" fill="#3c4048"/><path d="M449,3 h5.6 l2.4,2.4 v7.6 h-8 z" fill="#f2f2f2"/><circle cx="457" cy="10.8" r="2.5" fill="#e8303c"/><path d="M456,9.8 l2,2 M458,9.8 l-2,2" fill="none" stroke="#fff" stroke-width="0.5"/><rect x="463.1" y="1.5" width="0.6" height="13" fill="#2c3142"/><g transform="translate(467.4,2.6) scale(0.95)"><path d="M1,3.2 C1,0.8 3,0 5,0 C7.4,0 8.6,1.4 8.4,3.6 C8.3,5.2 7.6,6.6 7.2,7.6 C7,8.6 7.6,9.2 8.6,9 L8.8,9.9 C7,10.4 5.8,9.6 6,8 L5.4,6.6 C4.6,7.4 3.4,7.6 2.4,7 C1.2,6.2 1,4.6 1,3.2 z" fill="#d8dde6"/><path d="M3.2,1.6 C4,1.2 4.8,1.6 4.8,2.6 L4.6,5.6" fill="none" stroke="#8a90a0" stroke-width="0.5"/><circle cx="5.9" cy="2.6" r="0.4" fill="#444"/></g><circle cx="468.6" cy="11.2" r="1.9" fill="#38b8e8"/><circle cx="485.4" cy="5.2" r="1.5" fill="#e8d040"/><rect x="489.4" y="3.6" width="3.6" height="3" fill="#d8dde6" rx="0.4"/><line x1="486.8" y1="5.2" x2="489.4" y2="5.2" stroke="#98a0ac" stroke-width="0.6"/><rect x="483.8" y="8.8" width="4" height="3.6" fill="#9adcf4" rx="0.4"/><line x1="485.6" y1="6.6" x2="485.6" y2="8.8" stroke="#98a0ac" stroke-width="0.6"/><polygon points="489.4,8.6 494,10.6 489.4,12.8" fill="#3fcf4f"/><rect x="501.8" y="3.2" width="2.4" height="2.6" fill="#3cc85a"/><rect x="506.4" y="3.2" width="3.6" height="3" fill="#f0dc3c"/><circle cx="503.2" cy="9.2" r="2.6" fill="#e8303c"/><rect x="506.4" y="8" width="3.4" height="3.2" fill="#4cc6f0"/><path d="M505,12.4 l4.6,-4.8" fill="none" stroke="#c8ccd2" stroke-width="0.9"/><rect x="514.3" y="1.5" width="0.6" height="13" fill="#2c3142"/><rect x="520.6" y="4.4" width="4.2" height="7.6" fill="#e4e6ea" rx="2"/><rect x="521.4" y="3" width="2.6" height="1.8" fill="#c8ccd2" rx="0.8"/><path d="M520.6,6 l-1.8,-1 M520.6,8.2 h-2 M520.6,10.4 l-1.8,1 M524.8,6 l1.8,-1 M524.8,8.2 h2 M524.8,10.4 l1.8,1" fill="none" stroke="#9aa0aa" stroke-width="0.5"/><circle cx="541.4" cy="5.4" r="2.6" fill="#f5e14a"/><path d="M534,11.2 C536,9.6 538,10.4 540,10.6 C542,10.8 543.6,9.8 545,9.8 L545,10.6 C542.6,12.6 538,13 534,12.6 z" fill="#d88860"/><circle cx="556.5" cy="8" r="4.2" fill="none" stroke="#f2f2f2" stroke-width="2.4"/><circle cx="556.5" cy="8" r="4.2" fill="none" stroke="#e8303c" stroke-width="2.4" stroke-dasharray="3.3 3.3" stroke-dashoffset="-1.65"/><g transform="translate(569.4,2.6) scale(0.95)"><path d="M1,3.2 C1,0.8 3,0 5,0 C7.4,0 8.6,1.4 8.4,3.6 C8.3,5.2 7.6,6.6 7.2,7.6 C7,8.6 7.6,9.2 8.6,9 L8.8,9.9 C7,10.4 5.8,9.6 6,8 L5.4,6.6 C4.6,7.4 3.4,7.6 2.4,7 C1.2,6.2 1,4.6 1,3.2 z" fill="#c8ccd4"/><path d="M3.2,1.6 C4,1.2 4.8,1.6 4.8,2.6 L4.6,5.6" fill="none" stroke="#8a90a0" stroke-width="0.5"/><circle cx="5.9" cy="2.6" r="0.4" fill="#444"/></g><circle cx="570.4" cy="11" r="2.2" fill="#f0b428"/><rect x="585.4" y="3.6" width="9.6" height="8.6" fill="#f2f2f2" rx="0.4"/><rect x="586.6" y="2.8" width="3" height="1.6" fill="#58c8ec"/><rect x="590.6" y="5.6" width="3.4" height="0.6" fill="#aaa"/><rect x="590.6" y="7" width="3.4" height="0.6" fill="#aaa"/><circle cx="588.2" cy="9.2" r="1.7" fill="#f0d83c"/><rect x="589.4" y="8.8" width="3.6" height="1" fill="#f0d83c"/><polygon points="591,12.8 593,9.6 595,12.8" fill="#f5e14a"/></svg>
<div class="combo"><span>demodb</span><svg class="ic" style="left:63.6px;top:3.6px" width="5" height="4" viewBox="0 0 5 4"><polygon points="0.6,0.7 4.4,0.7 2.5,3.1" fill="#f2f2f2"/></svg></div>
</div>
<div class="tree">
<svg class="ic" style="left:629.5px;top:30.6px" width="131" height="343" viewBox="629.5 30.6 131 343"><rect x="629.5" y="38.46" width="131" height="8.42" fill="#191d29"/><rect x="629.5" y="55.3" width="131" height="8.42" fill="#191d29"/><rect x="629.5" y="72.14" width="131" height="8.42" fill="#191d29"/><rect x="629.5" y="88.98" width="131" height="8.42" fill="#191d29"/><rect x="629.5" y="105.82" width="131" height="8.42" fill="#191d29"/><rect x="629.5" y="122.66" width="131" height="8.42" fill="#191d29"/><rect x="629.5" y="139.5" width="131" height="8.42" fill="#191d29"/><rect x="629.5" y="156.34" width="131" height="8.42" fill="#191d29"/><rect x="629.5" y="173.18" width="131" height="8.42" fill="#191d29"/><rect x="629.5" y="190.02" width="131" height="8.42" fill="#191d29"/><rect x="629.5" y="206.86" width="131" height="8.42" fill="#191d29"/><rect x="629.5" y="223.7" width="131" height="8.42" fill="#191d29"/><rect x="629.5" y="240.54" width="131" height="8.42" fill="#191d29"/><rect x="629.5" y="257.38" width="131" height="8.42" fill="#191d29"/><rect x="629.5" y="274.22" width="131" height="8.42" fill="#191d29"/><rect x="629.5" y="291.06" width="131" height="8.42" fill="#191d29"/><rect x="629.5" y="307.9" width="131" height="8.42" fill="#191d29"/><rect x="629.5" y="324.74" width="131" height="8.42" fill="#191d29"/><rect x="629.5" y="341.58" width="131" height="8.42" fill="#191d29"/><rect x="629.5" y="358.42" width="131" height="8.42" fill="#191d29"/><rect x="629.5" y="375.26" width="131" height="8.42" fill="#191d29"/><path d="M637.6,31.95 a3.2,1.4 0 0 1 6.4,0 v4.6 a3.2,1.4 0 0 1 -6.4,0 z" fill="#eeeeee"/><path d="M637.6,33.48 a3.2,1.4 0 0 0 6.4,0" fill="none" stroke="#a8acb4" stroke-width="0.45"/><path d="M637.6,35.02 a3.2,1.4 0 0 0 6.4,0" fill="none" stroke="#a8acb4" stroke-width="0.45"/><polygon points="630.7,33.55 633.3,33.55 632,35.15" fill="#b8bcc8"/><circle cx="646" cy="40.97" r="1.9" fill="#e8303c"/><circle cx="649.4" cy="44.57" r="1.9" fill="#38c0f0"/><path d="M648.2,39.57 h2.2 v2.4 M645,43.77 v2.2 h2" fill="none" stroke="#d8dde6" stroke-width="0.6"/><rect x="644.6" y="47.59" width="5.8" height="6.6" fill="#dfe3e8" rx="0.5"/><rect x="645.8" y="48.79" width="3" height="2.6" fill="#f0dc3c"/><circle cx="650" cy="53.59" r="1.3" fill="#3fcf4f"/><rect x="644.6" y="56.21" width="6" height="5.8" fill="#dfe3e8" rx="0.6"/><rect x="645.4" y="57.61" width="4.4" height="0.6" fill="#8a90a0"/><rect x="645.4" y="59.21" width="4.4" height="0.6" fill="#8a90a0"/><rect x="648.8" y="61.01" width="2.4" height="1.8" fill="#c8ccd2" rx="0.3"/><circle cx="647.4" cy="67.63" r="3.3" fill="#38c0f0"/><path d="M645,66.43 q1.6,-1.6 3,-0.4 q0.6,1.6 -1,2.4 q-1.4,0 -2,-2 z" fill="#3fcf4f"/><rect x="648.2" y="68.43" width="3" height="2.8" fill="#e8e8e8" rx="0.3"/><rect x="645.4" y="73.05" width="2.6" height="5.6" fill="#c8ccd2" rx="0.3"/><rect x="644.6" y="78.45" width="4.4" height="1.2" fill="#aeb2ba"/><circle cx="649.4" cy="77.85" r="1.7" fill="#38c0f0"/><circle cx="649.4" cy="77.85" r="0.7" fill="#3fcf4f"/><rect x="644.6" y="81.47" width="2.6" height="2.6" fill="#38c0f0"/><polygon points="648,84.07 649.6,81.27 651.2,84.07" fill="#3fcf4f"/><polygon points="644.6,85.27 647.4,85.27 646,88.07" fill="#e8303c"/><rect x="648.2" y="85.27" width="2.8" height="2.8" fill="#f2f2f2"/><rect x="646.6" y="84.07" width="2" height="1.2" fill="#e8e8e8"/><rect x="644.8" y="89.49" width="5.6" height="7.2" fill="#f2f2f2" rx="0.5"/><rect x="645.8" y="90.89" width="1" height="1" fill="#9aa0aa"/><rect x="645.8" y="92.69" width="1" height="1" fill="#9aa0aa"/><circle cx="649.8" cy="95.09" r="1.5" fill="#38c0f0"/><polygon points="638.4,91.89 640,93.19 638.4,94.49" fill="#b8bcc8"/><polygon points="647.6,97.91 649.4,101.11 645.8,101.11" fill="#38c0f0"/><path d="M647.6,101.11 v1.4 M645.2,103.11 v-0.6 h4.8 v0.6" fill="none" stroke="#c8ccd2" stroke-width="0.5"/><rect x="644.2" y="103.11" width="2" height="2" fill="#3fcf4f"/><rect x="646.6" y="103.11" width="2" height="2" fill="#f0a030"/><rect x="649" y="103.11" width="2" height="2" fill="#e8303c"/><rect x="645.2" y="109.33" width="5.4" height="4.2" fill="#f2f2f2" rx="0.4"/><rect x="645.2" y="110.73" width="5.4" height="0.5" fill="#9aa0aa"/><line x1="644.2" y1="107.73" x2="651.4" y2="107.73" stroke="#c8ccd2" stroke-width="0.8"/><polygon points="646.6,107.73 647.9,106.43 649.2,107.73 647.9,109.03" fill="#c8ccd2"/><polygon points="637.7,109.33 640.3,109.33 639,110.93" fill="#b8bcc8"/><rect x="651.8" y="117.75" width="5.4" height="4.2" fill="#f2f2f2" rx="0.4"/><rect x="651.8" y="119.15" width="5.4" height="0.5" fill="#9aa0aa"/><line x1="650.8" y1="116.15" x2="658" y2="116.15" stroke="#e8303c" stroke-width="0.8"/><polygon points="653.2,116.15 654.5,114.85 655.8,116.15 654.5,117.45" fill="#e8303c"/><rect x="651.8" y="126.17" width="5.4" height="4.2" fill="#f2f2f2" rx="0.4"/><rect x="651.8" y="127.57" width="5.4" height="0.5" fill="#9aa0aa"/><line x1="650.8" y1="124.57" x2="658" y2="124.57" stroke="#c050e0" stroke-width="0.8"/><polygon points="653.2,124.57 654.5,123.27 655.8,124.57 654.5,125.87" fill="#c050e0"/><rect x="651.8" y="134.59" width="5.4" height="4.2" fill="#f2f2f2" rx="0.4"/><rect x="651.8" y="135.99" width="5.4" height="0.5" fill="#9aa0aa"/><line x1="650.8" y1="132.99" x2="658" y2="132.99" stroke="#c050e0" stroke-width="0.8"/><polygon points="653.2,132.99 654.5,131.69 655.8,132.99 654.5,134.29" fill="#c050e0"/><rect x="651.8" y="143.01" width="5.4" height="4.2" fill="#f2f2f2" rx="0.4"/><rect x="651.8" y="144.41" width="5.4" height="0.5" fill="#9aa0aa"/><line x1="650.8" y1="141.41" x2="658" y2="141.41" stroke="#c050e0" stroke-width="0.8"/><polygon points="653.2,141.41 654.5,140.11 655.8,141.41 654.5,142.71" fill="#c050e0"/><rect x="651.8" y="151.43" width="5.4" height="4.2" fill="#f2f2f2" rx="0.4"/><rect x="651.8" y="152.83" width="5.4" height="0.5" fill="#9aa0aa"/><line x1="650.8" y1="149.83" x2="658" y2="149.83" stroke="#f0dc3c" stroke-width="0.8"/><polygon points="653.2,149.83 654.5,148.53 655.8,149.83 654.5,151.13" fill="#f0dc3c"/><rect x="651.8" y="159.85" width="5.4" height="4.2" fill="#f2f2f2" rx="0.4"/><rect x="651.8" y="161.25" width="5.4" height="0.5" fill="#9aa0aa"/><line x1="650.8" y1="158.25" x2="658" y2="158.25" stroke="#f0dc3c" stroke-width="0.8"/><polygon points="653.2,158.25 654.5,156.95 655.8,158.25 654.5,159.55" fill="#f0dc3c"/><rect x="651.8" y="168.27" width="5.4" height="4.2" fill="#f2f2f2" rx="0.4"/><rect x="651.8" y="169.67" width="5.4" height="0.5" fill="#9aa0aa"/><line x1="650.8" y1="166.67" x2="658" y2="166.67" stroke="#f0dc3c" stroke-width="0.8"/><polygon points="653.2,166.67 654.5,165.37 655.8,166.67 654.5,167.97" fill="#f0dc3c"/><rect x="651.8" y="176.69" width="5.4" height="4.2" fill="#f2f2f2" rx="0.4"/><rect x="651.8" y="178.09" width="5.4" height="0.5" fill="#9aa0aa"/><line x1="650.8" y1="175.09" x2="658" y2="175.09" stroke="#f0dc3c" stroke-width="0.8"/><polygon points="653.2,175.09 654.5,173.79 655.8,175.09 654.5,176.39" fill="#f0dc3c"/><rect x="651.8" y="185.11" width="5.4" height="4.2" fill="#f2f2f2" rx="0.4"/><rect x="651.8" y="186.51" width="5.4" height="0.5" fill="#9aa0aa"/><line x1="650.8" y1="183.51" x2="658" y2="183.51" stroke="#3fcf4f" stroke-width="0.8"/><polygon points="653.2,183.51 654.5,182.21 655.8,183.51 654.5,184.81" fill="#3fcf4f"/><rect x="651.8" y="193.53" width="5.4" height="4.2" fill="#f2f2f2" rx="0.4"/><rect x="651.8" y="194.93" width="5.4" height="0.5" fill="#9aa0aa"/><line x1="650.8" y1="191.93" x2="658" y2="191.93" stroke="#3fcf4f" stroke-width="0.8"/><polygon points="653.2,191.93 654.5,190.63 655.8,191.93 654.5,193.23" fill="#3fcf4f"/><rect x="651.8" y="201.95" width="5.4" height="4.2" fill="#f2f2f2" rx="0.4"/><rect x="651.8" y="203.35" width="5.4" height="0.5" fill="#9aa0aa"/><line x1="650.8" y1="200.35" x2="658" y2="200.35" stroke="#38c0f0" stroke-width="0.8"/><polygon points="653.2,200.35 654.5,199.05 655.8,200.35 654.5,201.65" fill="#38c0f0"/><rect x="651.8" y="210.37" width="5.4" height="4.2" fill="#f2f2f2" rx="0.4"/><rect x="651.8" y="211.77" width="5.4" height="0.5" fill="#9aa0aa"/><line x1="650.8" y1="208.77" x2="658" y2="208.77" stroke="#3fcf4f" stroke-width="0.8"/><polygon points="653.2,208.77 654.5,207.47 655.8,208.77 654.5,210.07" fill="#3fcf4f"/><rect x="651.8" y="218.79" width="5.4" height="4.2" fill="#f2f2f2" rx="0.4"/><rect x="651.8" y="220.19" width="5.4" height="0.5" fill="#9aa0aa"/><line x1="650.8" y1="217.19" x2="658" y2="217.19" stroke="#f0a030" stroke-width="0.8"/><polygon points="653.2,217.19 654.5,215.89 655.8,217.19 654.5,218.49" fill="#f0a030"/><circle cx="647.7" cy="226.01" r="1.9" fill="#f0c8a0"/><path d="M644.4,231.41 c0,-3.6 6.6,-3.6 6.6,0 z" fill="#38c0f0"/><path d="M645.8,225.61 q1.9,-2.6 3.8,0" fill="none" stroke="#8a5a30" stroke-width="0.8"/><polygon points="637.7,227.21 640.3,227.21 639,228.81" fill="#b8bcc8"/><circle cx="654.3" cy="234.43" r="1.9" fill="#f0c8a0"/><path d="M651,239.83 c0,-3.6 6.6,-3.6 6.6,0 z" fill="#e8f4fa"/><path d="M652.4,234.03 q1.9,-2.6 3.8,0" fill="none" stroke="#8a5a30" stroke-width="0.8"/><rect x="644.4" y="241.45" width="3" height="1.6" fill="#e8cf3a" rx="0.3"/><rect x="644.4" y="242.25" width="7" height="5.8" fill="#f5e14a" rx="0.4"/><circle cx="646.6" cy="245.05" r="1.1" fill="#e8303c"/><rect x="648" y="244.05" width="1.8" height="1.8" fill="#38c0f0"/><polygon points="647,247.25 648,245.65 649,247.25" fill="#3fcf4f"/><polygon points="637.7,244.05 640.3,244.05 639,245.65" fill="#b8bcc8"/><rect x="651" y="249.87" width="3" height="1.6" fill="#e8cf3a" rx="0.3"/><rect x="651" y="250.67" width="7" height="5.8" fill="#f5e14a" rx="0.4"/><circle cx="653.2" cy="253.47" r="1.1" fill="#e8303c"/><rect x="654.6" y="252.47" width="1.8" height="1.8" fill="#38c0f0"/><polygon points="653.6,255.67 654.6,254.07 655.6,255.67" fill="#3fcf4f"/><polygon points="645.2,251.87 646.8,253.17 645.2,254.47" fill="#b8bcc8"/><rect x="651" y="258.29" width="3" height="1.6" fill="#e8cf3a" rx="0.3"/><rect x="651" y="259.09" width="7" height="5.8" fill="#f5e14a" rx="0.4"/><circle cx="653.2" cy="261.89" r="1.1" fill="#e8303c"/><rect x="654.6" y="260.89" width="1.8" height="1.8" fill="#38c0f0"/><polygon points="653.6,264.09 654.6,262.49 655.6,264.09" fill="#3fcf4f"/><polygon points="645.2,260.29 646.8,261.59 645.2,262.89" fill="#b8bcc8"/><rect x="651" y="266.71" width="3" height="1.6" fill="#e8cf3a" rx="0.3"/><rect x="651" y="267.51" width="7" height="5.8" fill="#f5e14a" rx="0.4"/><circle cx="653.2" cy="270.31" r="1.1" fill="#e8303c"/><rect x="654.6" y="269.31" width="1.8" height="1.8" fill="#38c0f0"/><polygon points="653.6,272.51 654.6,270.91 655.6,272.51" fill="#3fcf4f"/><polygon points="645.2,268.71 646.8,270.01 645.2,271.31" fill="#b8bcc8"/><rect x="658.8" y="274.22" width="101.6" height="8.42" fill="#1f3448"/><rect x="651" y="275.13" width="3" height="1.6" fill="#e8cf3a" rx="0.3"/><rect x="651" y="275.93" width="7" height="5.8" fill="#f5e14a" rx="0.4"/><circle cx="653.2" cy="278.73" r="1.1" fill="#e8303c"/><rect x="654.6" y="277.73" width="1.8" height="1.8" fill="#38c0f0"/><polygon points="653.6,280.93 654.6,279.33 655.6,280.93" fill="#3fcf4f"/><polygon points="645.2,277.13 646.8,278.43 645.2,279.73" fill="#b8bcc8"/><rect x="644.8" y="285.55" width="6" height="4.8" fill="#f2f2f2" rx="0.3"/><path d="M645,283.35 h5.6 l0.8,2.4 a1.2,1.2 0 0 1 -2.4,0 a1.2,1.2 0 0 1 -2.4,0 a1.2,1.2 0 0 1 -2.4,0 z" fill="#e8303c"/><rect x="646" y="287.35" width="1.6" height="1.6" fill="#9aa0aa"/><rect x="648.2" y="287.35" width="1.6" height="3" fill="#9aa0aa"/><polygon points="637.7,286.15 640.3,286.15 639,287.75" fill="#b8bcc8"/><rect x="651.4" y="293.97" width="6" height="4.8" fill="#f2f2f2" rx="0.3"/><path d="M651.6,291.77 h5.6 l0.8,2.4 a1.2,1.2 0 0 1 -2.4,0 a1.2,1.2 0 0 1 -2.4,0 a1.2,1.2 0 0 1 -2.4,0 z" fill="#e8303c"/><rect x="652.6" y="295.77" width="1.6" height="1.6" fill="#9aa0aa"/><rect x="654.8" y="295.77" width="1.6" height="3" fill="#9aa0aa"/><polygon points="645.2,293.97 646.8,295.27 645.2,296.57" fill="#b8bcc8"/><rect x="651.4" y="302.39" width="6" height="4.8" fill="#f2f2f2" rx="0.3"/><path d="M651.6,300.19 h5.6 l0.8,2.4 a1.2,1.2 0 0 1 -2.4,0 a1.2,1.2 0 0 1 -2.4,0 a1.2,1.2 0 0 1 -2.4,0 z" fill="#e8303c"/><rect x="652.6" y="304.19" width="1.6" height="1.6" fill="#9aa0aa"/><rect x="654.8" y="304.19" width="1.6" height="3" fill="#9aa0aa"/><polygon points="644.5,302.99 647.1,302.99 645.8,304.59" fill="#b8bcc8"/><polygon points="661.2,308.41 663,311.61 659.4,311.61" fill="#38c0f0"/><path d="M661.2,311.61 v1.4 M658.8,313.61 v-0.6 h4.8 v0.6" fill="none" stroke="#c8ccd2" stroke-width="0.5"/><rect x="657.8" y="313.61" width="2" height="2" fill="#3fcf4f"/><rect x="660.2" y="313.61" width="2" height="2" fill="#f0a030"/><rect x="662.6" y="313.61" width="2" height="2" fill="#e8303c"/><rect x="644.4" y="317.23" width="6.6" height="6.2" fill="#f2f2f2" rx="0.4"/><rect x="644.4" y="317.23" width="3.3" height="1.6" fill="#e8303c"/><rect x="647.7" y="317.23" width="3.3" height="1.6" fill="#3fcf4f"/><polygon points="647.6,324.03 651.4,320.43 651.4,324.03" fill="#f0a030"/><polygon points="637.7,319.83 640.3,319.83 639,321.43" fill="#b8bcc8"/><rect x="651" y="325.65" width="6.6" height="6.2" fill="#f2f2f2" rx="0.4"/><rect x="651" y="325.65" width="3.3" height="1.6" fill="#e8303c"/><rect x="654.3" y="325.65" width="3.3" height="1.6" fill="#3fcf4f"/><polygon points="654.2,332.45 658,328.85 658,332.45" fill="#f0a030"/><polygon points="645.2,327.65 646.8,328.95 645.2,330.25" fill="#b8bcc8"/><rect x="644.2" y="333.67" width="7.2" height="7.2" fill="#38c0f0" rx="0.4"/><path d="M645.8,336.07 v-0.8 h4 v0.8 M647.8,335.27 v4.2 M647,339.47 h1.6" fill="none" stroke="#f2f2f2" stroke-width="0.7"/><polygon points="637.7,336.67 640.3,336.67 639,338.27" fill="#b8bcc8"/><rect x="650.8" y="342.09" width="7.2" height="7.2" fill="#38c0f0" rx="0.4"/><path d="M652.4,344.49 v-0.8 h4 v0.8 M654.4,343.69 v4.2 M653.6,347.89 h1.6" fill="none" stroke="#f2f2f2" stroke-width="0.7"/><rect x="650.8" y="350.51" width="7.2" height="7.2" fill="#38c0f0" rx="0.4"/><path d="M652.4,352.91 v-0.8 h4 v0.8 M654.4,352.11 v4.2 M653.6,356.31 h1.6" fill="none" stroke="#f2f2f2" stroke-width="0.7"/><rect x="650.8" y="358.93" width="7.2" height="7.2" fill="#38c0f0" rx="0.4"/><path d="M652.4,361.33 v-0.8 h4 v0.8 M654.4,360.53 v4.2 M653.6,364.73 h1.6" fill="none" stroke="#f2f2f2" stroke-width="0.7"/><rect x="650.8" y="367.35" width="7.2" height="7.2" fill="#38c0f0" rx="0.4"/><path d="M652.4,369.75 v-0.8 h4 v0.8 M654.4,368.95 v4.2 M653.6,373.15 h1.6" fill="none" stroke="#f2f2f2" stroke-width="0.7"/></svg>
<div class="tl big" style="left:646px;top:30.55px">demodb</div>
<div class="tl it" style="left:653.2px;top:38.97px">Cast (0)</div>
<div class="tl it" style="left:653.2px;top:47.39px">Event Trigger (0)</div>
<div class="tl it" style="left:653.2px;top:55.81px">Extension (0)</div>
<div class="tl it" style="left:653.2px;top:64.23px">Foreign Data Wrapper (0)</div>
<div class="tl it" style="left:653.2px;top:72.65px">Foreign Server (0)</div>
<div class="tl it" style="left:653.2px;top:81.07px">Generic SQL (0)</div>
<div class="tl it" style="left:653.2px;top:89.49px">Language (4)</div>
<div class="tl it" style="left:653.2px;top:97.91px">Permission (0)</div>
<div class="tl it" style="left:653.2px;top:106.33px">Relationship (13)</div>
<div class="tl" style="left:660px;top:114.75px">many_table_e_has_many_table_e</div>
<div class="tl" style="left:660px;top:123.17px">rel_table_h_table_a</div>
<div class="tl" style="left:660px;top:131.59px">rel_table_h_table_e</div>
<div class="tl" style="left:660px;top:140.01px">rel_table_h_table_f</div>
<div class="tl" style="left:660px;top:148.43px">rel_view_b_table_b</div>
<div class="tl" style="left:660px;top:156.85px">rel_view_b_view_test</div>
<div class="tl" style="left:660px;top:165.27px">rel_view_test_table_a</div>
<div class="tl" style="left:660px;top:173.69px">rel_view_test_table_d</div>
<div class="tl" style="left:660px;top:182.11px">table_a_has_many_table_d</div>
<div class="tl" style="left:660px;top:190.53px">table_b_has_many_table_d</div>
<div class="tl" style="left:660px;top:198.95px">table_e_inherits_table_c</div>
<div class="tl" style="left:660px;top:207.37px">table_f_has_many_table_c</div>
<div class="tl" style="left:660px;top:215.79px">table_g_copies_table_a</div>
<div class="tl it" style="left:653.2px;top:224.21px">Role (1)</div>
<div class="tl it red" style="left:660px;top:232.63px">postgres</div>
<div class="tl it" style="left:653.2px;top:241.05px">Schema (4)</div>
<div class="tl it red" style="left:660px;top:249.47px">pg_catalog</div>
<div class="tl it red" style="left:660px;top:257.89px">public</div>
<div class="tl" style="left:660px;top:266.31px">schema_a</div>
<div class="tl" style="left:660px;top:274.73px">schema_b</div>
<div class="tl it" style="left:653.2px;top:283.15px">Tablespace (2)</div>
<div class="tl it red" style="left:660px;top:291.57px">pg_default</div>
<div class="tl it red" style="left:660px;top:299.99px">pg_global</div>
<div class="tl it" style="left:667px;top:308.41px">Permission (0)</div>
<div class="tl it" style="left:653.2px;top:316.83px">Tag (1)</div>
<div class="tl" style="left:660px;top:325.25px">red_tables</div>
<div class="tl it" style="left:653.2px;top:333.67px">Textbox (5)</div>
<div class="tl" style="left:660px;top:342.09px">col_propag_txt</div>
<div class="tl" style="left:660px;top:350.51px">fk_rel_txt</div>
<div class="tl" style="left:660px;top:358.93px">pagila_desc</div>
<div class="tl" style="left:660px;top:367.35px">tag_txt</div>
</div>
<div class="bottom">
<div class="bbtn " style="left:33px;width:39.8px"><span style="left:9.9px">Validation</span></div>
<div class="bbtn " style="left:75px;width:32px"><span style="left:10px">Search</span></div>
<div class="bbtn " style="left:109px;width:30.6px"><span style="left:10.4px">Layers</span></div>
<div class="bbtn " style="left:142px;width:41.2px"><span style="left:10.8px">Changelog</span></div>
<div class="bbtn " style="left:339px;width:82.2px"><span style="left:11px">2050, 1370</span></div>
<span style="left:404px;top:2px;font-size:6px;line-height:10.4px">70%</span>

<div class="bbtn " style="left:423.8px;width:64.6px"><span style="left:11px">None</span></div>
<span style="left:470px;top:2px;font-size:6px;line-height:10.4px">None</span>
<div class="bbtn dbm" style="left:491px;width:27.2px"><span style="left:11.4px">.dbm</span></div>
<div class="bbtn on" style="left:688.4px;width:34.2px"><span style="left:11.4px">Objects</span></div>
<div class="bbtn " style="left:724.6px;width:41.8px"><span style="left:10.4px">Operations</span></div>
<svg class="ic" style="left:0;top:0" width="768" height="14" viewBox="0 390 768 14"><rect x="35.4" y="392.6" width="6.6" height="6" fill="#f2f2f2" rx="0.5"/><circle cx="37.2" cy="394.5" r="1" fill="#e8403c"/><polygon points="37,397.8 38.6,394.8 40.2,397.8" fill="#3a90e8"/><path d="M38.4,397.6 l1.8,2.2 l3.2,-4.2" fill="none" stroke="#3fcf4f" stroke-width="1.4"/><rect x="77.4" y="392.6" width="6.6" height="6" fill="#f2f2f2" rx="0.5"/><circle cx="79.2" cy="394.5" r="1" fill="#e8403c"/><polygon points="79,397.8 80.6,394.8 82.2,397.8" fill="#3a90e8"/><circle cx="82.4" cy="398.4" r="2.3" fill="#bfeaf5"/><polygon points="112,394.6 116,392.6 120,394.6 116,396.6" fill="#e8303c"/><polygon points="112,396.8 116,394.8 120,396.8 116,398.8" fill="#f0dc3c"/><polygon points="112,399 116,397 120,399 116,401" fill="#38c0f0"/><rect x="145" y="392.4" width="5.6" height="7.4" fill="#f2f2f2" rx="0.5"/><circle cx="145.6" cy="397.6" r="1.7" fill="#e8303c"/><circle cx="150.4" cy="399.2" r="1.9" fill="#38c0f0"/><path d="M146.6,394.2 h2.6 M146.6,395.6 h2.6" fill="none" stroke="#3fcf4f" stroke-width="0.6"/><path d="M343.6,395 h5 M343.6,399 h5 M346.2,393.4 l2,1.6 l-2,1.6" fill="none" stroke="#58c8ec" stroke-width="0.8"/><circle cx="344.6" cy="397" r="0.9" fill="#bfeaf5"/><circle cx="397.4" cy="396" r="2.2" fill="#cdeef8"/><line x1="399" y1="397.6" x2="400.6" y2="399.4" stroke="#2a7d96" stroke-width="0.7"/><path d="M426.6,393.6 l5,5.6 M431.6,393.6 l-5,5.6" fill="none" stroke="#e8303c" stroke-width="1.1"/><rect x="461" y="393.4" width="6.4" height="6.4" fill="#d8dce4" rx="0.4"/><rect x="461.6" y="394" width="2.4" height="2.4" fill="#e8303c"/><rect x="464.4" y="394" width="2.4" height="2.4" fill="#3fcf4f"/><rect x="461.6" y="396.8" width="2.4" height="2.4" fill="#f0dc3c"/><rect x="464.4" y="396.8" width="2.4" height="2.4" fill="#38c0f0"/><rect x="493.4" y="393.2" width="5.6" height="5.6" fill="#e8eaee" rx="0.5"/><circle cx="494.8" cy="394.8" r="0.9" fill="#e8303c"/><circle cx="498.6" cy="398.4" r="1.9" fill="#38c0f0"/><rect x="495.4" y="396" width="2.4" height="1.6" fill="#3fcf4f"/><rect x="691.4" y="393.4" width="2.6" height="2.6" fill="#38c0f0" rx="0.3"/><circle cx="697" cy="394.8" r="1.4" fill="#3fcf4f"/><circle cx="692.8" cy="399" r="1.4" fill="#e8303c"/><polygon points="695.4,400.4 697,397.4 698.6,400.4" fill="#f0dc3c"/><rect x="727.4" y="393" width="5.4" height="6" fill="#f2f2f2" rx="0.4"/><circle cx="728.6" cy="394.8" r="0.9" fill="#e8303c"/><circle cx="731.6" cy="399" r="2.1" fill="#bfeaf5"/><rect x="728" y="397" width="2" height="1.6" fill="#3fcf4f"/></svg>
</div>
</body></html>
